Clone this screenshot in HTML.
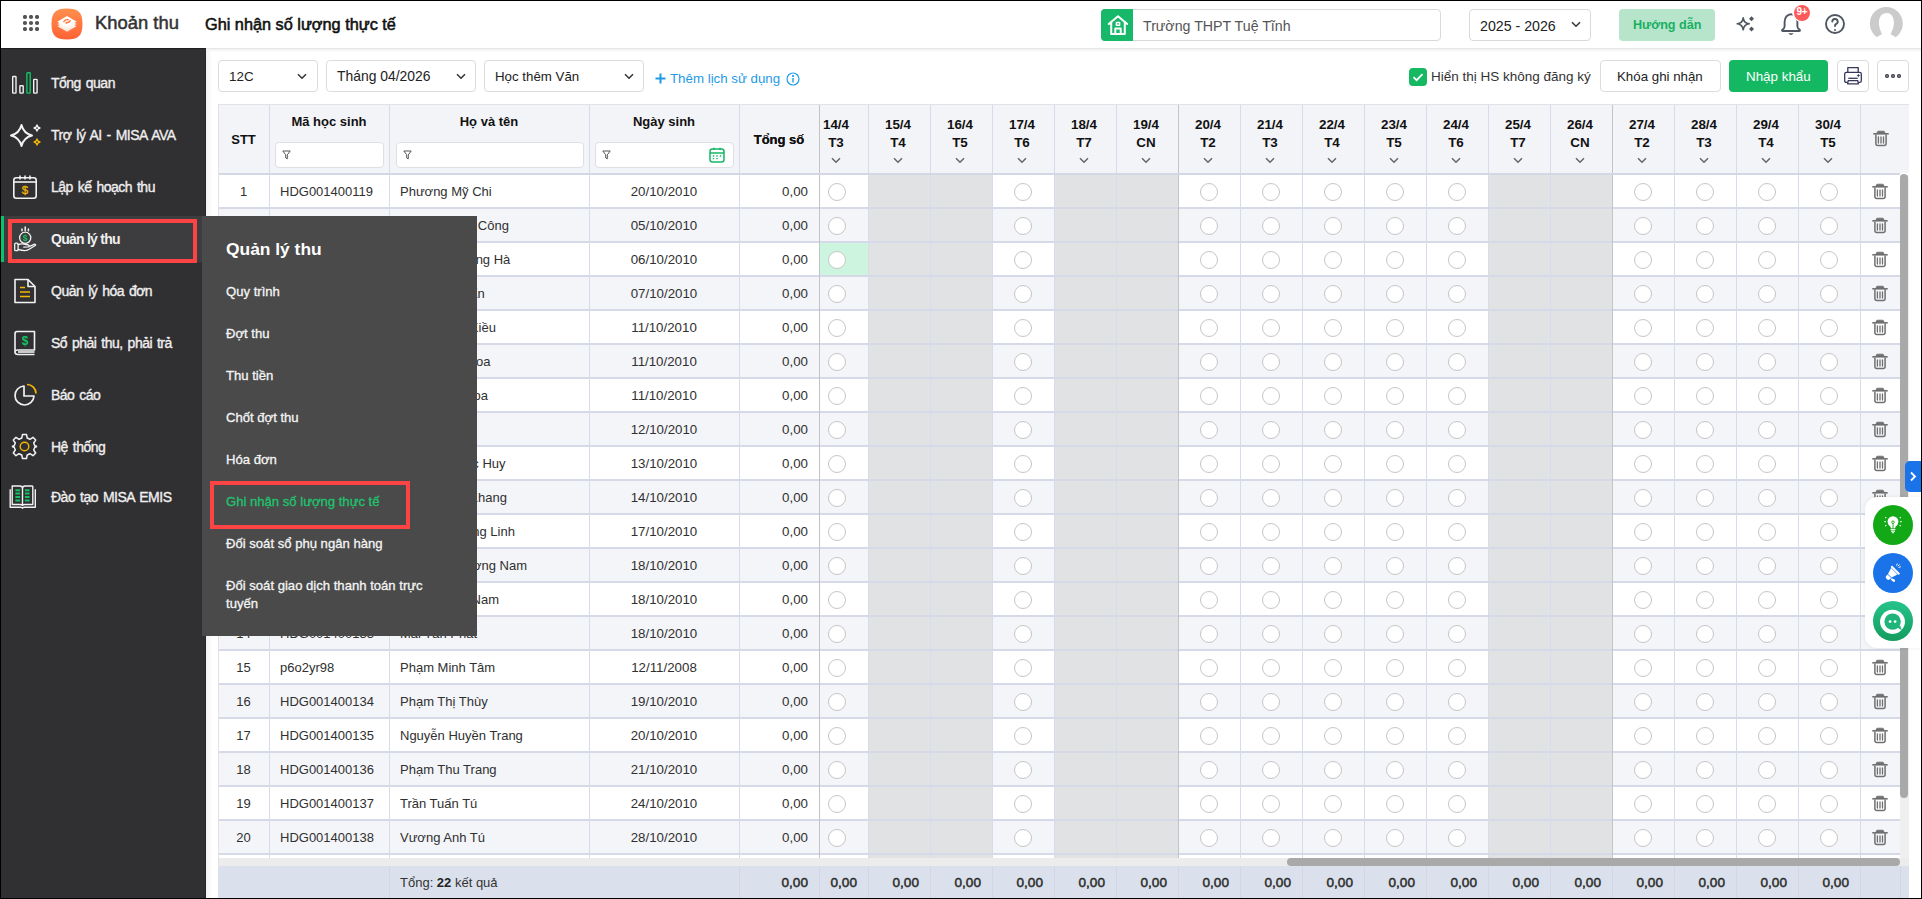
<!DOCTYPE html><html><head><meta charset="utf-8"><style>

*{box-sizing:border-box;margin:0;padding:0}
html,body{width:1922px;height:899px;overflow:hidden;background:#fff;font-family:"Liberation Sans", sans-serif;color:#222}
.a{position:absolute}
.t{position:absolute;white-space:nowrap;line-height:1}
svg{display:block}

</style></head><body>
<div class="a" style="left:0;top:0;width:1922px;height:1px;background:#000;z-index:50"></div>
<div class="a" style="left:0;top:0;width:1px;height:899px;background:#000;z-index:50"></div>
<div class="a" style="left:1921px;top:0;width:1px;height:899px;background:#000;z-index:50"></div>
<div class="a" style="left:0;top:898px;width:1922px;height:1px;background:#000;z-index:50"></div>
<div class="a" style="left:1px;top:1px;width:1920px;height:47px;background:#fff;z-index:5"></div>
<div class="a" style="left:1px;top:48px;width:1920px;height:1px;background:#e6e6e6;z-index:5"></div>
<div class="a" style="left:206px;top:49px;width:1715px;height:3px;background:linear-gradient(#f0f0f0,#fff);z-index:1"></div>
<svg class="a" style="left:23px;top:15px;z-index:6" width="16" height="16" viewBox="0 0 16 16"><circle cx="2" cy="2" r="2.1" fill="#555"/><circle cx="2" cy="8" r="2.1" fill="#555"/><circle cx="2" cy="14" r="2.1" fill="#555"/><circle cx="8" cy="2" r="2.1" fill="#555"/><circle cx="8" cy="8" r="2.1" fill="#555"/><circle cx="8" cy="14" r="2.1" fill="#555"/><circle cx="14" cy="2" r="2.1" fill="#555"/><circle cx="14" cy="8" r="2.1" fill="#555"/><circle cx="14" cy="14" r="2.1" fill="#555"/></svg>
<svg class="a" style="left:51px;top:8px;z-index:6" width="32" height="32" viewBox="0 0 32 32">
<defs><linearGradient id="lg" x1="0" y1="0" x2="0" y2="1"><stop offset="0" stop-color="#ff8f4f"/><stop offset="1" stop-color="#ff6234"/></linearGradient>
<linearGradient id="lw" x1="0" y1="0" x2="0" y2="1"><stop offset="0" stop-color="#fff"/><stop offset="1" stop-color="#fde3d2"/></linearGradient></defs>
<path d="M16 0.5 C27 0.5 31.5 4 31.5 16 C31.5 28 27 31.5 16 31.5 C5 31.5 0.5 28 0.5 16 C0.5 4 5 0.5 16 0.5 Z" fill="url(#lg)"/>
<path d="M6.5 18.3 L16 13.5 L25.5 18.3 L16 23.8 Z" fill="url(#lw)"/>
<path d="M6.3 16 L16 11 L25.7 16 L16 21 Z" fill="#fff3ea"/>
<path d="M6.3 13.8 L16 8 L25.7 13.8 L16 19 Z" fill="#fff"/>
<path d="M12.8 13.6 Q14 11.4 17 11.6 M19.2 12.6 Q18 15 15 14.8" stroke="#ff7d3e" stroke-width="1.4" fill="none" stroke-linecap="round"/>
<path d="M16.2 10.6 L17.8 11.6 L16.4 12.7 Z M15.8 13.8 L14.2 14.8 L15.6 15.9 Z" fill="#ff7d3e"/>
</svg>
<div class="t" style="left:95px;top:14px;font-size:18.4px;color:#333;-webkit-text-stroke:0.5px #333;z-index:6">Khoản thu</div>
<div class="t" style="left:205px;top:16px;font-size:16.3px;color:#111;-webkit-text-stroke:0.55px #111;z-index:6">Ghi nhận số lượng thực tế</div>
<div class="a" style="left:1101px;top:9px;width:340px;height:32px;border:1px solid #d9d9d9;border-radius:4px;background:#fff;z-index:6"></div>
<div class="a" style="left:1101px;top:9px;width:32px;height:32px;background:#18b86a;border-radius:4px 0 0 4px;z-index:7"></div>
<svg class="a" style="left:1107px;top:14px;z-index:8" width="22" height="22" viewBox="0 0 22 22" fill="none" stroke="#fff" stroke-width="2" stroke-linejoin="round" stroke-linecap="round">
<path d="M1.8 10 L11 2.2 L20.2 10"/><path d="M4.2 8.3 V20 H17.8 V8.3"/><path d="M8.3 20 V14.5 H13.7 V20"/><rect x="9.4" y="8.4" width="3.2" height="2.8" stroke-width="1.5"/></svg>
<div class="t" style="left:1143px;top:19px;font-size:14.2px;color:#555;z-index:8">Trường THPT Tuệ Tĩnh</div>
<div class="a" style="left:1469px;top:9px;width:122px;height:32px;border:1px solid #d9d9d9;border-radius:4px;background:#fff;z-index:6"></div>
<div class="t" style="left:1480px;top:19px;font-size:14.2px;color:#222;z-index:8">2025 - 2026</div>
<svg class="a" style="left:1571px;top:21px;z-index:8" width="10" height="7" viewBox="0 0 10 7"><path d="M1 1.2 L5 5.2 L9 1.2" stroke="#333" stroke-width="1.5" fill="none"/></svg>
<div class="a" style="left:1619px;top:9px;width:96px;height:32px;background:#b6e5cb;border-radius:4px;z-index:6"></div>
<div class="t" style="left:1633px;top:19px;font-size:12.6px;font-weight:bold;color:#17b063;z-index:8">Hướng dẫn</div>
<svg class="a" style="left:1735px;top:16px;z-index:8" width="20" height="16" viewBox="0 0 20 16">
<path d="M8.2 1.8 Q8.9 7.1 14.2 7.8 Q8.9 8.5 8.2 13.8 Q7.5 8.5 2.2 7.8 Q7.5 7.1 8.2 1.8 Z" fill="none" stroke="#50565f" stroke-width="1.6" stroke-linejoin="round"/>
<path d="M16.5 0.3 L19 2.8 L16.5 5.3 L14 2.8 Z" fill="#50565f"/><path d="M16.5 10.6 L19 13.1 L16.5 15.6 L14 13.1 Z" fill="#50565f"/></svg>
<svg class="a" style="left:1780px;top:13px;z-index:8" width="22" height="24" viewBox="0 0 22 24" fill="none" stroke="#50565f" stroke-width="1.9" stroke-linecap="round" stroke-linejoin="round">
<path d="M4.6 13.5 V8.8 A6.4 7.6 0 0 1 17.4 8.8 V13.5 Q17.6 15.6 19.6 16.6 Q20.6 17.9 19 18 H3 Q1.4 17.9 2.4 16.6 Q4.4 15.6 4.6 13.5 Z"/></svg>
<svg class="a" style="left:1788px;top:33px;z-index:8" width="6" height="3" viewBox="0 0 6 3"><path d="M0.3 0.3 H5.7 Q3 3.5 0.3 0.3 Z" fill="#50565f"/></svg>
<div class="a" style="left:1792px;top:3px;width:19px;height:19px;border-radius:50%;background:#fff;z-index:9"></div>
<div class="a" style="left:1794px;top:5px;width:16px;height:16px;border-radius:50%;background:#fd5a5a;z-index:9"></div>
<div class="t" style="left:1794px;top:7px;width:16px;text-align:center;font-size:10px;font-weight:bold;letter-spacing:-0.3px;color:#fff;z-index:10">9+</div>
<svg class="a" style="left:1825px;top:14px;z-index:8" width="20" height="20" viewBox="0 0 20 20" fill="none" stroke="#50565f" stroke-width="1.9" stroke-linecap="round">
<circle cx="10" cy="10" r="9"/><path d="M7.3 7.6 A2.7 2.6 0 1 1 10.9 10.1 Q10 10.7 10 12"/></svg>
<div class="a" style="left:1834px;top:29px;width:2.4px;height:2.4px;background:#50565f;z-index:9;border-radius:1px"></div>
<svg class="a" style="left:1869px;top:6px;z-index:8" width="34" height="34" viewBox="0 0 34 34">
<circle cx="17.3" cy="17.5" r="16.5" fill="#cbcbcb"/>
<path d="M7 34 L8.2 31 Q9.5 29.8 12.8 28.2 Q10 22 9.8 17 Q10.3 7 17.4 7 Q24.7 7 25 16.5 Q25 22 21.6 28.2 Q25 29.8 26.3 31 L28 34 Z" fill="#fff"/></svg>
<div class="a" style="left:1px;top:48px;width:205px;height:850px;background:#302f32;z-index:20"></div>
<div class="a" style="left:1px;top:48px;width:205px;height:1px;background:#1f1e21;z-index:20"></div>
<div class="a" style="left:205px;top:48px;width:1px;height:850px;background:#28272a;z-index:20"></div>
<div class="a" style="left:206px;top:49px;width:6px;height:849px;background:linear-gradient(90deg,#f2f2f2,rgba(255,255,255,0));z-index:1"></div>
<div class="a" style="left:1px;top:216px;width:201px;height:46px;background:#3d3d3f;z-index:21"></div>
<div class="a" style="left:1px;top:216px;width:3px;height:46px;background:#06c46e;z-index:22"></div>
<div class="t" style="left:51px;top:76px;font-size:14px;letter-spacing:-0.5px;word-spacing:1.5px;-webkit-text-stroke:0.35px #eee;color:#f0f0f0;z-index:23">Tổng quan</div>
<div class="t" style="left:51px;top:128px;font-size:14px;letter-spacing:-0.5px;word-spacing:1.5px;-webkit-text-stroke:0.35px #eee;color:#f0f0f0;z-index:23">Trợ lý AI - MISA AVA</div>
<div class="t" style="left:51px;top:180px;font-size:14px;letter-spacing:-0.5px;word-spacing:1.5px;-webkit-text-stroke:0.35px #eee;color:#f0f0f0;z-index:23">Lập kế hoạch thu</div>
<div class="t" style="left:51px;top:232px;font-weight:bold;font-size:14px;letter-spacing:-0.75px;color:#f0f0f0;z-index:23">Quản lý thu</div>
<div class="t" style="left:51px;top:284px;font-size:14px;letter-spacing:-0.5px;word-spacing:1.5px;-webkit-text-stroke:0.35px #eee;color:#f0f0f0;z-index:23">Quản lý hóa đơn</div>
<div class="t" style="left:51px;top:336px;font-size:14px;letter-spacing:-0.5px;word-spacing:1.5px;-webkit-text-stroke:0.35px #eee;color:#f0f0f0;z-index:23">Sổ phải thu, phải trả</div>
<div class="t" style="left:51px;top:388px;font-size:14px;letter-spacing:-0.5px;word-spacing:1.5px;-webkit-text-stroke:0.35px #eee;color:#f0f0f0;z-index:23">Báo cáo</div>
<div class="t" style="left:51px;top:440px;font-size:14px;letter-spacing:-0.5px;word-spacing:1.5px;-webkit-text-stroke:0.35px #eee;color:#f0f0f0;z-index:23">Hệ thống</div>
<div class="t" style="left:51px;top:490px;font-size:14px;letter-spacing:-0.5px;word-spacing:1.5px;-webkit-text-stroke:0.35px #eee;color:#f0f0f0;z-index:23">Đào tạo MISA EMIS</div>
<svg class="a" style="left:11px;top:71px;z-index:23" width="28" height="24" viewBox="0 0 28 24" fill="none" stroke-width="1.4"><rect x="1.7" y="5.5" width="3.3" height="16.6" rx="0.6" stroke="#f2f2f2"/><rect x="8.9" y="14.7" width="3.3" height="7.4" rx="0.6" stroke="#f2f2f2"/><rect x="15.9" y="1.7" width="3.3" height="20.4" rx="0.6" stroke="#12c264"/><rect x="22.7" y="8.4" width="3.4" height="13.7" rx="0.6" stroke="#f2f2f2"/></svg>
<svg class="a" style="left:9px;top:123px;z-index:23" width="32" height="25" viewBox="0 0 32 25" fill="none" stroke-width="1.8" stroke-linejoin="round"><path d="M12.5 2 Q14.6 10.4 23 12.5 Q14.6 14.6 12.5 23 Q10.4 14.6 2 12.5 Q10.4 10.4 12.5 2 Z" stroke="#f2f2f2" stroke-width="2"/><path d="M28 2 Q28.5 4.5 31 5 Q28.5 5.5 28 8 Q27.5 5.5 25 5 Q27.5 4.5 28 2Z" stroke="#f2f2f2" stroke-width="1.3"/><path d="M28 16 Q28.5 18.5 31 19 Q28.5 19.5 28 22 Q27.5 19.5 25 19 Q27.5 18.5 28 16Z" stroke="#f2b705" stroke-width="1.3"/></svg>
<svg class="a" style="left:12px;top:174px;z-index:23" width="26" height="26" viewBox="0 0 26 26" fill="none" stroke-width="1.6"><rect x="1.8" y="3.8" width="22.4" height="20.4" rx="2.5" stroke="#f2f2f2"/><path d="M1.8 8 H24.2" stroke="#f2f2f2"/><path d="M8 1.5 V5.5 M13 1.5 V5.5 M18 1.5 V5.5" stroke="#f2f2f2"/><text x="13" y="20" font-family="Liberation Sans" font-size="11.5" fill="#f2b705" stroke="#f2b705" stroke-width="0.3" text-anchor="middle">$</text></svg>
<svg class="a" style="left:13px;top:226px;z-index:23" width="24" height="27" viewBox="0 0 24 27" fill="none" stroke-width="1.3" stroke-linecap="round" stroke-linejoin="round"><path d="M12.2 0.9 V4.6 M9 3 V4.8 M15.4 3 V4.8" stroke="#f2f2f2" stroke-width="1.5"/><circle cx="12.2" cy="11.8" r="5.6" stroke="#f2f2f2"/><text x="12.2" y="14.9" font-family="Liberation Sans" font-size="8.6" font-weight="bold" fill="#12c264" stroke="none" text-anchor="middle">$</text><rect x="1.7" y="17.2" width="3.4" height="7.4" rx="0.9" stroke="#f2f2f2"/><path d="M5.1 18.6 Q8 17.4 11 18 L15.4 19 Q17 19.9 15.6 20.9 L10.8 21.1 M5.1 23.4 Q8.5 24.6 12 24.6 Q14.5 24.6 16.6 23 L22.6 19.3 Q22.8 17.9 21 18.3 L15.6 20.9" stroke="#f2f2f2"/></svg>
<svg class="a" style="left:13px;top:278px;z-index:23" width="24" height="26" viewBox="0 0 24 26" fill="none" stroke-width="1.6" stroke-linejoin="round"><path d="M2 1.5 H15 L22 8.5 V24.5 H2 Z" stroke="#f2f2f2"/><path d="M15 1.5 V8.5 H22" stroke="#f2f2f2"/><path d="M7 9.5 H12 M7 14 H17 M7 18.5 H17" stroke="#f2b705" stroke-width="1.7"/></svg>
<svg class="a" style="left:13px;top:330px;z-index:23" width="24" height="26" viewBox="0 0 24 26" fill="none" stroke-width="1.6" stroke-linejoin="round"><path d="M4 1.5 H21.5 V20 H5 Q2 20 2 22 Q2 24.5 5 24.5 H21.5 M2 22 V4 Q2 1.5 4 1.5" stroke="#f2f2f2"/><path d="M5 22 H21.5" stroke="#f2f2f2"/><text x="12" y="14.5" font-family="Liberation Sans" font-size="12" font-weight="bold" fill="#12c264" stroke="none" text-anchor="middle">$</text></svg>
<svg class="a" style="left:13px;top:383px;z-index:23" width="25" height="25" viewBox="0 0 25 25" fill="none" stroke-width="1.7"><path d="M11 3 A9.5 9.5 0 1 0 21 13 H11 Z" stroke="#f2f2f2" stroke-linejoin="round"/><path d="M14 1.5 A9 9 0 0 1 23 10.5" stroke="#f2b705"/></svg>
<svg class="a" style="left:11px;top:433px;z-index:23" width="27" height="27" viewBox="0 0 27 27" fill="none" stroke-width="1.5" stroke-linejoin="round"><path d="M11.5 1.5 H15.5 L16.2 5 L19 6.3 L22 4.3 L24.7 7 L22.7 10 L23.8 12.7 L25.5 13.3 V13.7 L23.8 14.3 L22.7 17 L24.7 20 L22 22.7 L19 20.7 L16.2 22 L15.5 25.5 H11.5 L10.8 22 L8 20.7 L5 22.7 L2.3 20 L4.3 17 L3.2 14.3 L1.5 13.7 V13.3 L3.2 12.7 L4.3 10 L2.3 7 L5 4.3 L8 6.3 L10.8 5 Z" stroke="#f2f2f2"/><circle cx="13.5" cy="13.5" r="4.3" stroke="#f2b705" stroke-width="1.4"/></svg>
<svg class="a" style="left:9px;top:485px;z-index:23" width="28" height="24" viewBox="0 0 28 24" fill="none" stroke-width="1.4" stroke-linejoin="round"><path d="M1.2 4.3 V22.3 H11.5 Q13.5 22.3 13.5 23.3 Q13.5 22.3 15.5 22.3 H26.3 V4.3" stroke="#f2f2f2"/><path d="M3.2 1 H11 Q13.5 1 13.5 3.5 V20.5 Q13 19.5 11 19.5 H3.2 Z" stroke="#f2f2f2"/><path d="M23.8 1 H16 Q13.5 1 13.5 3.5 M23.8 1 V19.5 H16 Q14 19.5 13.5 20.5" stroke="#f2f2f2"/><path d="M6.4 5.3 H11.1 M6.4 8.6 H11.1 M6.4 11.9 H11.1 M6.4 15.4 H11.1 M15.9 5.3 H20.6 M15.9 8.6 H20.6 M15.9 11.9 H20.6 M15.9 15.4 H20.6" stroke="#12c264" stroke-width="2"/></svg>
<div class="a" style="left:8px;top:219px;width:189px;height:44px;border:4px solid #fd4444;z-index:30"></div>
<div class="a" style="left:218px;top:60px;width:100px;height:32px;border:1px solid #dcdcdc;border-radius:4px;background:#fff;"></div>
<div class="t" style="left:229px;top:70px;font-size:13.4px;color:#222">12C</div>
<svg class="a" style="left:297px;top:73px;z-index:8" width="10" height="7" viewBox="0 0 10 7"><path d="M1 1.2 L5 5.2 L9 1.2" stroke="#333" stroke-width="1.5" fill="none"/></svg>
<div class="a" style="left:326px;top:60px;width:150px;height:32px;border:1px solid #dcdcdc;border-radius:4px;background:#fff;"></div>
<div class="t" style="left:337px;top:70px;font-size:13.9px;color:#222">Tháng 04/2026</div>
<svg class="a" style="left:456px;top:73px;z-index:8" width="10" height="7" viewBox="0 0 10 7"><path d="M1 1.2 L5 5.2 L9 1.2" stroke="#333" stroke-width="1.5" fill="none"/></svg>
<div class="a" style="left:484px;top:60px;width:160px;height:32px;border:1px solid #dcdcdc;border-radius:4px;background:#fff;"></div>
<div class="t" style="left:495px;top:70px;font-size:13.3px;color:#222">Học thêm Văn</div>
<svg class="a" style="left:624px;top:73px;z-index:8" width="10" height="7" viewBox="0 0 10 7"><path d="M1 1.2 L5 5.2 L9 1.2" stroke="#333" stroke-width="1.5" fill="none"/></svg>
<svg class="a" style="left:655px;top:73px" width="11" height="11" viewBox="0 0 11 11"><path d="M5.5 0.5 V10.5 M0.5 5.5 H10.5" stroke="#1e9ae6" stroke-width="2"/></svg>
<div class="t" style="left:670px;top:72px;font-size:13.3px;color:#1e9ae6">Thêm lịch sử dụng</div>
<svg class="a" style="left:786px;top:72px" width="14" height="14" viewBox="0 0 14 14" fill="none" stroke="#1e9ae6" stroke-width="1.2"><circle cx="7" cy="7" r="6"/><path d="M7 6 V10.5" stroke-width="1.4"/><circle cx="7" cy="4" r="0.5" fill="#1e9ae6"/></svg>
<div class="a" style="left:1409px;top:68px;width:18px;height:18px;border-radius:4px;background:#16b862"></div>
<svg class="a" style="left:1409px;top:68px" width="18" height="18" viewBox="0 0 18 18"><path d="M4.5 9.2 L7.6 12.2 L13.5 6.2" stroke="#fff" stroke-width="1.8" fill="none"/></svg>
<div class="t" style="left:1431px;top:70px;font-size:13.5px;color:#333">Hiển thị HS không đăng ký</div>
<div class="a" style="left:1600px;top:60px;width:121px;height:32px;border:1px solid #dcdcdc;border-radius:4px;background:#fff;"></div>
<div class="t" style="left:1617px;top:70px;font-size:13.3px;color:#222">Khóa ghi nhận</div>
<div class="a" style="left:1729px;top:60px;width:99px;height:32px;background:#14b863;border-radius:4px"></div>
<div class="t" style="left:1746px;top:70px;font-size:13.4px;color:#fff">Nhập khẩu</div>
<div class="a" style="left:1837px;top:60px;width:32px;height:32px;border:1px solid #dcdcdc;border-radius:4px;background:#fff;"></div>
<svg class="a" style="left:1843px;top:66px" width="20" height="20" viewBox="0 0 20 20" fill="none" stroke="#37375a" stroke-width="1.3" stroke-linejoin="round">
<path d="M4.8 6.2 V1.6 H15.2 V6.2"/><path d="M4.6 16.4 H3.4 Q1.7 16.4 1.7 14.7 V8 Q1.7 6.4 3.4 6.4 H16.6 Q18.3 6.4 18.3 8 V14.7 Q18.3 16.4 16.6 16.4 H15.4"/>
<path d="M5.3 12.3 H14.7"/><path d="M5.2 14.6 H14.8 L15.4 17.8 H4.6 Z"/><path d="M15.4 8.3 L16.6 9.5 L15.4 10.7 L14.2 9.5 Z" fill="#37375a" stroke-width="0.6"/></svg>
<div class="a" style="left:1877px;top:60px;width:32px;height:32px;border:1px solid #dcdcdc;border-radius:4px;background:#fff;"></div>
<svg class="a" style="left:1883px;top:72px" width="20" height="8" viewBox="0 0 20 8"><circle cx="4" cy="4" r="1.5" fill="#888" stroke="#3a3a4a" stroke-width="1.1"/><circle cx="10" cy="4" r="1.5" fill="#888" stroke="#3a3a4a" stroke-width="1.1"/><circle cx="16" cy="4" r="1.5" fill="#888" stroke="#3a3a4a" stroke-width="1.1"/></svg>
<div class="a" style="left:218px;top:104px;width:1691px;height:1px;background:#e2e2e6"></div>
<div class="a" style="left:218px;top:104px;width:1px;height:762px;background:#e2e2e6;z-index:3"></div>
<div class="a" style="left:219px;top:105px;width:1690px;height:68px;background:#f3f4f8"></div>
<div class="a" style="left:219px;top:173px;width:1681px;height:2px;background:#d3d7e6;z-index:2"></div>
<div class="a" style="left:219px;top:175px;width:1681px;height:683px;overflow:hidden;z-index:1">
<div class="a" style="left:0;top:0px;width:1681px;height:32px;background:#fff"></div>
<div class="a" style="left:0;top:32px;width:1681px;height:2px;background:#d6d9e8"></div>
<div class="a" style="left:0;top:34px;width:1681px;height:32px;background:#f4f5f9"></div>
<div class="a" style="left:0;top:66px;width:1681px;height:2px;background:#d6d9e8"></div>
<div class="a" style="left:0;top:68px;width:1681px;height:32px;background:#fff"></div>
<div class="a" style="left:0;top:100px;width:1681px;height:2px;background:#d6d9e8"></div>
<div class="a" style="left:0;top:102px;width:1681px;height:32px;background:#f4f5f9"></div>
<div class="a" style="left:0;top:134px;width:1681px;height:2px;background:#d6d9e8"></div>
<div class="a" style="left:0;top:136px;width:1681px;height:32px;background:#fff"></div>
<div class="a" style="left:0;top:168px;width:1681px;height:2px;background:#d6d9e8"></div>
<div class="a" style="left:0;top:170px;width:1681px;height:32px;background:#f4f5f9"></div>
<div class="a" style="left:0;top:202px;width:1681px;height:2px;background:#d6d9e8"></div>
<div class="a" style="left:0;top:204px;width:1681px;height:32px;background:#fff"></div>
<div class="a" style="left:0;top:236px;width:1681px;height:2px;background:#d6d9e8"></div>
<div class="a" style="left:0;top:238px;width:1681px;height:32px;background:#f4f5f9"></div>
<div class="a" style="left:0;top:270px;width:1681px;height:2px;background:#d6d9e8"></div>
<div class="a" style="left:0;top:272px;width:1681px;height:32px;background:#fff"></div>
<div class="a" style="left:0;top:304px;width:1681px;height:2px;background:#d6d9e8"></div>
<div class="a" style="left:0;top:306px;width:1681px;height:32px;background:#f4f5f9"></div>
<div class="a" style="left:0;top:338px;width:1681px;height:2px;background:#d6d9e8"></div>
<div class="a" style="left:0;top:340px;width:1681px;height:32px;background:#fff"></div>
<div class="a" style="left:0;top:372px;width:1681px;height:2px;background:#d6d9e8"></div>
<div class="a" style="left:0;top:374px;width:1681px;height:32px;background:#f4f5f9"></div>
<div class="a" style="left:0;top:406px;width:1681px;height:2px;background:#d6d9e8"></div>
<div class="a" style="left:0;top:408px;width:1681px;height:32px;background:#fff"></div>
<div class="a" style="left:0;top:440px;width:1681px;height:2px;background:#d6d9e8"></div>
<div class="a" style="left:0;top:442px;width:1681px;height:32px;background:#f4f5f9"></div>
<div class="a" style="left:0;top:474px;width:1681px;height:2px;background:#d6d9e8"></div>
<div class="a" style="left:0;top:476px;width:1681px;height:32px;background:#fff"></div>
<div class="a" style="left:0;top:508px;width:1681px;height:2px;background:#d6d9e8"></div>
<div class="a" style="left:0;top:510px;width:1681px;height:32px;background:#f4f5f9"></div>
<div class="a" style="left:0;top:542px;width:1681px;height:2px;background:#d6d9e8"></div>
<div class="a" style="left:0;top:544px;width:1681px;height:32px;background:#fff"></div>
<div class="a" style="left:0;top:576px;width:1681px;height:2px;background:#d6d9e8"></div>
<div class="a" style="left:0;top:578px;width:1681px;height:32px;background:#f4f5f9"></div>
<div class="a" style="left:0;top:610px;width:1681px;height:2px;background:#d6d9e8"></div>
<div class="a" style="left:0;top:612px;width:1681px;height:32px;background:#fff"></div>
<div class="a" style="left:0;top:644px;width:1681px;height:2px;background:#d6d9e8"></div>
<div class="a" style="left:0;top:646px;width:1681px;height:32px;background:#f4f5f9"></div>
<div class="a" style="left:0;top:678px;width:1681px;height:2px;background:#d6d9e8"></div>
<div class="a" style="left:0;top:680px;width:1681px;height:32px;background:#fff"></div>
<div class="a" style="left:0;top:712px;width:1681px;height:2px;background:#d6d9e8"></div>
<div class="a" style="left:650px;top:0;width:61px;height:683px;background:#e1e2e4"></div>
<div class="a" style="left:712px;top:0;width:61px;height:683px;background:#e1e2e4"></div>
<div class="a" style="left:836px;top:0;width:61px;height:683px;background:#e1e2e4"></div>
<div class="a" style="left:898px;top:0;width:61px;height:683px;background:#e1e2e4"></div>
<div class="a" style="left:1270px;top:0;width:61px;height:683px;background:#e1e2e4"></div>
<div class="a" style="left:1332px;top:0;width:61px;height:683px;background:#e1e2e4"></div>
<div class="a" style="left:650px;top:32px;width:61px;height:2px;background:#d6d9e8"></div>
<div class="a" style="left:712px;top:32px;width:61px;height:2px;background:#d6d9e8"></div>
<div class="a" style="left:836px;top:32px;width:61px;height:2px;background:#d6d9e8"></div>
<div class="a" style="left:898px;top:32px;width:61px;height:2px;background:#d6d9e8"></div>
<div class="a" style="left:1270px;top:32px;width:61px;height:2px;background:#d6d9e8"></div>
<div class="a" style="left:1332px;top:32px;width:61px;height:2px;background:#d6d9e8"></div>
<div class="a" style="left:650px;top:66px;width:61px;height:2px;background:#d6d9e8"></div>
<div class="a" style="left:712px;top:66px;width:61px;height:2px;background:#d6d9e8"></div>
<div class="a" style="left:836px;top:66px;width:61px;height:2px;background:#d6d9e8"></div>
<div class="a" style="left:898px;top:66px;width:61px;height:2px;background:#d6d9e8"></div>
<div class="a" style="left:1270px;top:66px;width:61px;height:2px;background:#d6d9e8"></div>
<div class="a" style="left:1332px;top:66px;width:61px;height:2px;background:#d6d9e8"></div>
<div class="a" style="left:650px;top:100px;width:61px;height:2px;background:#d6d9e8"></div>
<div class="a" style="left:712px;top:100px;width:61px;height:2px;background:#d6d9e8"></div>
<div class="a" style="left:836px;top:100px;width:61px;height:2px;background:#d6d9e8"></div>
<div class="a" style="left:898px;top:100px;width:61px;height:2px;background:#d6d9e8"></div>
<div class="a" style="left:1270px;top:100px;width:61px;height:2px;background:#d6d9e8"></div>
<div class="a" style="left:1332px;top:100px;width:61px;height:2px;background:#d6d9e8"></div>
<div class="a" style="left:650px;top:134px;width:61px;height:2px;background:#d6d9e8"></div>
<div class="a" style="left:712px;top:134px;width:61px;height:2px;background:#d6d9e8"></div>
<div class="a" style="left:836px;top:134px;width:61px;height:2px;background:#d6d9e8"></div>
<div class="a" style="left:898px;top:134px;width:61px;height:2px;background:#d6d9e8"></div>
<div class="a" style="left:1270px;top:134px;width:61px;height:2px;background:#d6d9e8"></div>
<div class="a" style="left:1332px;top:134px;width:61px;height:2px;background:#d6d9e8"></div>
<div class="a" style="left:650px;top:168px;width:61px;height:2px;background:#d6d9e8"></div>
<div class="a" style="left:712px;top:168px;width:61px;height:2px;background:#d6d9e8"></div>
<div class="a" style="left:836px;top:168px;width:61px;height:2px;background:#d6d9e8"></div>
<div class="a" style="left:898px;top:168px;width:61px;height:2px;background:#d6d9e8"></div>
<div class="a" style="left:1270px;top:168px;width:61px;height:2px;background:#d6d9e8"></div>
<div class="a" style="left:1332px;top:168px;width:61px;height:2px;background:#d6d9e8"></div>
<div class="a" style="left:650px;top:202px;width:61px;height:2px;background:#d6d9e8"></div>
<div class="a" style="left:712px;top:202px;width:61px;height:2px;background:#d6d9e8"></div>
<div class="a" style="left:836px;top:202px;width:61px;height:2px;background:#d6d9e8"></div>
<div class="a" style="left:898px;top:202px;width:61px;height:2px;background:#d6d9e8"></div>
<div class="a" style="left:1270px;top:202px;width:61px;height:2px;background:#d6d9e8"></div>
<div class="a" style="left:1332px;top:202px;width:61px;height:2px;background:#d6d9e8"></div>
<div class="a" style="left:650px;top:236px;width:61px;height:2px;background:#d6d9e8"></div>
<div class="a" style="left:712px;top:236px;width:61px;height:2px;background:#d6d9e8"></div>
<div class="a" style="left:836px;top:236px;width:61px;height:2px;background:#d6d9e8"></div>
<div class="a" style="left:898px;top:236px;width:61px;height:2px;background:#d6d9e8"></div>
<div class="a" style="left:1270px;top:236px;width:61px;height:2px;background:#d6d9e8"></div>
<div class="a" style="left:1332px;top:236px;width:61px;height:2px;background:#d6d9e8"></div>
<div class="a" style="left:650px;top:270px;width:61px;height:2px;background:#d6d9e8"></div>
<div class="a" style="left:712px;top:270px;width:61px;height:2px;background:#d6d9e8"></div>
<div class="a" style="left:836px;top:270px;width:61px;height:2px;background:#d6d9e8"></div>
<div class="a" style="left:898px;top:270px;width:61px;height:2px;background:#d6d9e8"></div>
<div class="a" style="left:1270px;top:270px;width:61px;height:2px;background:#d6d9e8"></div>
<div class="a" style="left:1332px;top:270px;width:61px;height:2px;background:#d6d9e8"></div>
<div class="a" style="left:650px;top:304px;width:61px;height:2px;background:#d6d9e8"></div>
<div class="a" style="left:712px;top:304px;width:61px;height:2px;background:#d6d9e8"></div>
<div class="a" style="left:836px;top:304px;width:61px;height:2px;background:#d6d9e8"></div>
<div class="a" style="left:898px;top:304px;width:61px;height:2px;background:#d6d9e8"></div>
<div class="a" style="left:1270px;top:304px;width:61px;height:2px;background:#d6d9e8"></div>
<div class="a" style="left:1332px;top:304px;width:61px;height:2px;background:#d6d9e8"></div>
<div class="a" style="left:650px;top:338px;width:61px;height:2px;background:#d6d9e8"></div>
<div class="a" style="left:712px;top:338px;width:61px;height:2px;background:#d6d9e8"></div>
<div class="a" style="left:836px;top:338px;width:61px;height:2px;background:#d6d9e8"></div>
<div class="a" style="left:898px;top:338px;width:61px;height:2px;background:#d6d9e8"></div>
<div class="a" style="left:1270px;top:338px;width:61px;height:2px;background:#d6d9e8"></div>
<div class="a" style="left:1332px;top:338px;width:61px;height:2px;background:#d6d9e8"></div>
<div class="a" style="left:650px;top:372px;width:61px;height:2px;background:#d6d9e8"></div>
<div class="a" style="left:712px;top:372px;width:61px;height:2px;background:#d6d9e8"></div>
<div class="a" style="left:836px;top:372px;width:61px;height:2px;background:#d6d9e8"></div>
<div class="a" style="left:898px;top:372px;width:61px;height:2px;background:#d6d9e8"></div>
<div class="a" style="left:1270px;top:372px;width:61px;height:2px;background:#d6d9e8"></div>
<div class="a" style="left:1332px;top:372px;width:61px;height:2px;background:#d6d9e8"></div>
<div class="a" style="left:650px;top:406px;width:61px;height:2px;background:#d6d9e8"></div>
<div class="a" style="left:712px;top:406px;width:61px;height:2px;background:#d6d9e8"></div>
<div class="a" style="left:836px;top:406px;width:61px;height:2px;background:#d6d9e8"></div>
<div class="a" style="left:898px;top:406px;width:61px;height:2px;background:#d6d9e8"></div>
<div class="a" style="left:1270px;top:406px;width:61px;height:2px;background:#d6d9e8"></div>
<div class="a" style="left:1332px;top:406px;width:61px;height:2px;background:#d6d9e8"></div>
<div class="a" style="left:650px;top:440px;width:61px;height:2px;background:#d6d9e8"></div>
<div class="a" style="left:712px;top:440px;width:61px;height:2px;background:#d6d9e8"></div>
<div class="a" style="left:836px;top:440px;width:61px;height:2px;background:#d6d9e8"></div>
<div class="a" style="left:898px;top:440px;width:61px;height:2px;background:#d6d9e8"></div>
<div class="a" style="left:1270px;top:440px;width:61px;height:2px;background:#d6d9e8"></div>
<div class="a" style="left:1332px;top:440px;width:61px;height:2px;background:#d6d9e8"></div>
<div class="a" style="left:650px;top:474px;width:61px;height:2px;background:#d6d9e8"></div>
<div class="a" style="left:712px;top:474px;width:61px;height:2px;background:#d6d9e8"></div>
<div class="a" style="left:836px;top:474px;width:61px;height:2px;background:#d6d9e8"></div>
<div class="a" style="left:898px;top:474px;width:61px;height:2px;background:#d6d9e8"></div>
<div class="a" style="left:1270px;top:474px;width:61px;height:2px;background:#d6d9e8"></div>
<div class="a" style="left:1332px;top:474px;width:61px;height:2px;background:#d6d9e8"></div>
<div class="a" style="left:650px;top:508px;width:61px;height:2px;background:#d6d9e8"></div>
<div class="a" style="left:712px;top:508px;width:61px;height:2px;background:#d6d9e8"></div>
<div class="a" style="left:836px;top:508px;width:61px;height:2px;background:#d6d9e8"></div>
<div class="a" style="left:898px;top:508px;width:61px;height:2px;background:#d6d9e8"></div>
<div class="a" style="left:1270px;top:508px;width:61px;height:2px;background:#d6d9e8"></div>
<div class="a" style="left:1332px;top:508px;width:61px;height:2px;background:#d6d9e8"></div>
<div class="a" style="left:650px;top:542px;width:61px;height:2px;background:#d6d9e8"></div>
<div class="a" style="left:712px;top:542px;width:61px;height:2px;background:#d6d9e8"></div>
<div class="a" style="left:836px;top:542px;width:61px;height:2px;background:#d6d9e8"></div>
<div class="a" style="left:898px;top:542px;width:61px;height:2px;background:#d6d9e8"></div>
<div class="a" style="left:1270px;top:542px;width:61px;height:2px;background:#d6d9e8"></div>
<div class="a" style="left:1332px;top:542px;width:61px;height:2px;background:#d6d9e8"></div>
<div class="a" style="left:650px;top:576px;width:61px;height:2px;background:#d6d9e8"></div>
<div class="a" style="left:712px;top:576px;width:61px;height:2px;background:#d6d9e8"></div>
<div class="a" style="left:836px;top:576px;width:61px;height:2px;background:#d6d9e8"></div>
<div class="a" style="left:898px;top:576px;width:61px;height:2px;background:#d6d9e8"></div>
<div class="a" style="left:1270px;top:576px;width:61px;height:2px;background:#d6d9e8"></div>
<div class="a" style="left:1332px;top:576px;width:61px;height:2px;background:#d6d9e8"></div>
<div class="a" style="left:650px;top:610px;width:61px;height:2px;background:#d6d9e8"></div>
<div class="a" style="left:712px;top:610px;width:61px;height:2px;background:#d6d9e8"></div>
<div class="a" style="left:836px;top:610px;width:61px;height:2px;background:#d6d9e8"></div>
<div class="a" style="left:898px;top:610px;width:61px;height:2px;background:#d6d9e8"></div>
<div class="a" style="left:1270px;top:610px;width:61px;height:2px;background:#d6d9e8"></div>
<div class="a" style="left:1332px;top:610px;width:61px;height:2px;background:#d6d9e8"></div>
<div class="a" style="left:650px;top:644px;width:61px;height:2px;background:#d6d9e8"></div>
<div class="a" style="left:712px;top:644px;width:61px;height:2px;background:#d6d9e8"></div>
<div class="a" style="left:836px;top:644px;width:61px;height:2px;background:#d6d9e8"></div>
<div class="a" style="left:898px;top:644px;width:61px;height:2px;background:#d6d9e8"></div>
<div class="a" style="left:1270px;top:644px;width:61px;height:2px;background:#d6d9e8"></div>
<div class="a" style="left:1332px;top:644px;width:61px;height:2px;background:#d6d9e8"></div>
<div class="a" style="left:650px;top:678px;width:61px;height:2px;background:#d6d9e8"></div>
<div class="a" style="left:712px;top:678px;width:61px;height:2px;background:#d6d9e8"></div>
<div class="a" style="left:836px;top:678px;width:61px;height:2px;background:#d6d9e8"></div>
<div class="a" style="left:898px;top:678px;width:61px;height:2px;background:#d6d9e8"></div>
<div class="a" style="left:1270px;top:678px;width:61px;height:2px;background:#d6d9e8"></div>
<div class="a" style="left:1332px;top:678px;width:61px;height:2px;background:#d6d9e8"></div>
<div class="a" style="left:650px;top:712px;width:61px;height:2px;background:#d6d9e8"></div>
<div class="a" style="left:712px;top:712px;width:61px;height:2px;background:#d6d9e8"></div>
<div class="a" style="left:836px;top:712px;width:61px;height:2px;background:#d6d9e8"></div>
<div class="a" style="left:898px;top:712px;width:61px;height:2px;background:#d6d9e8"></div>
<div class="a" style="left:1270px;top:712px;width:61px;height:2px;background:#d6d9e8"></div>
<div class="a" style="left:1332px;top:712px;width:61px;height:2px;background:#d6d9e8"></div>
<div class="a" style="left:601px;top:68px;width:48px;height:32px;background:#cdf4df"></div>
<div class="a" style="left:50px;top:0;width:1px;height:683px;background:#d8dbe9"></div>
<div class="a" style="left:170px;top:0;width:1px;height:683px;background:#d8dbe9"></div>
<div class="a" style="left:370px;top:0;width:1px;height:683px;background:#d8dbe9"></div>
<div class="a" style="left:520px;top:0;width:1px;height:683px;background:#d8dbe9"></div>
<div class="a" style="left:649px;top:0;width:1px;height:683px;background:#d8dbe9"></div>
<div class="a" style="left:711px;top:0;width:1px;height:683px;background:#d8dbe9"></div>
<div class="a" style="left:773px;top:0;width:1px;height:683px;background:#d8dbe9"></div>
<div class="a" style="left:835px;top:0;width:1px;height:683px;background:#d8dbe9"></div>
<div class="a" style="left:897px;top:0;width:1px;height:683px;background:#d8dbe9"></div>
<div class="a" style="left:959px;top:0;width:1px;height:683px;background:#c4c4c8"></div>
<div class="a" style="left:1021px;top:0;width:1px;height:683px;background:#d8dbe9"></div>
<div class="a" style="left:1083px;top:0;width:1px;height:683px;background:#d8dbe9"></div>
<div class="a" style="left:1145px;top:0;width:1px;height:683px;background:#d8dbe9"></div>
<div class="a" style="left:1207px;top:0;width:1px;height:683px;background:#d8dbe9"></div>
<div class="a" style="left:1269px;top:0;width:1px;height:683px;background:#d8dbe9"></div>
<div class="a" style="left:1331px;top:0;width:1px;height:683px;background:#d8dbe9"></div>
<div class="a" style="left:1393px;top:0;width:1px;height:683px;background:#c4c4c8"></div>
<div class="a" style="left:1455px;top:0;width:1px;height:683px;background:#d8dbe9"></div>
<div class="a" style="left:1517px;top:0;width:1px;height:683px;background:#d8dbe9"></div>
<div class="a" style="left:1579px;top:0;width:1px;height:683px;background:#d8dbe9"></div>
<div class="a" style="left:1641px;top:0;width:1px;height:683px;background:#d8dbe9"></div>
<div class="a" style="left:600px;top:0;width:1px;height:683px;background:#c3c3c7"></div>
<div class="t" style="left:-1px;top:10px;width:51px;text-align:center;font-size:13px;color:#303030">1</div>
<div class="t" style="left:61px;top:10px;font-size:13px;color:#303030">HDG001400119</div>
<div class="t" style="left:181px;top:10px;font-size:13px;color:#303030">Phương Mỹ Chi</div>
<div class="t" style="left:370px;top:10px;width:150px;text-align:center;font-size:13.3px;color:#303030">20/10/2010</div>
<div class="t" style="left:521px;top:10px;width:68px;text-align:right;font-size:13.3px;color:#303030">0,00</div>
<div class="a" style="left:609px;top:8px;width:18px;height:18px;border:1px solid #c6c6c6;border-radius:50%;background:#fff"></div>
<div class="a" style="left:795px;top:8px;width:18px;height:18px;border:1px solid #c6c6c6;border-radius:50%;background:#fff"></div>
<div class="a" style="left:981px;top:8px;width:18px;height:18px;border:1px solid #c6c6c6;border-radius:50%;background:#fff"></div>
<div class="a" style="left:1043px;top:8px;width:18px;height:18px;border:1px solid #c6c6c6;border-radius:50%;background:#fff"></div>
<div class="a" style="left:1105px;top:8px;width:18px;height:18px;border:1px solid #c6c6c6;border-radius:50%;background:#fff"></div>
<div class="a" style="left:1167px;top:8px;width:18px;height:18px;border:1px solid #c6c6c6;border-radius:50%;background:#fff"></div>
<div class="a" style="left:1229px;top:8px;width:18px;height:18px;border:1px solid #c6c6c6;border-radius:50%;background:#fff"></div>
<div class="a" style="left:1415px;top:8px;width:18px;height:18px;border:1px solid #c6c6c6;border-radius:50%;background:#fff"></div>
<div class="a" style="left:1477px;top:8px;width:18px;height:18px;border:1px solid #c6c6c6;border-radius:50%;background:#fff"></div>
<div class="a" style="left:1539px;top:8px;width:18px;height:18px;border:1px solid #c6c6c6;border-radius:50%;background:#fff"></div>
<div class="a" style="left:1601px;top:8px;width:18px;height:18px;border:1px solid #c6c6c6;border-radius:50%;background:#fff"></div>
<svg class="a" style="left:1653px;top:8px;z-index:1" width="16" height="17" viewBox="0 0 16 17" fill="none" stroke="#707070" stroke-width="1.5"><path d="M0.3 3.8 H15.7" stroke-width="1.6"/><path d="M3.9 3.2 L4.9 1.2 H11.1 L12.1 3.2 Z" fill="#707070" stroke-width="0.8"/><path d="M2.9 4.4 V13.6 Q2.9 15.6 4.9 15.6 H11.1 Q13.1 15.6 13.1 13.6 V4.4"/><path d="M5.4 7 V13 M8 7 V13 M10.5 7 V13" stroke-width="1.3" stroke-linecap="round"/></svg>
<div class="t" style="left:-1px;top:44px;width:51px;text-align:center;font-size:13px;color:#303030">2</div>
<div class="t" style="left:61px;top:44px;font-size:13px;color:#303030">HDG001400120</div>
<div class="t" style="left:181px;top:44px;font-size:13px;color:#303030">Phạm Thành Công</div>
<div class="t" style="left:370px;top:44px;width:150px;text-align:center;font-size:13.3px;color:#303030">05/10/2010</div>
<div class="t" style="left:521px;top:44px;width:68px;text-align:right;font-size:13.3px;color:#303030">0,00</div>
<div class="a" style="left:609px;top:42px;width:18px;height:18px;border:1px solid #c6c6c6;border-radius:50%;background:#fff"></div>
<div class="a" style="left:795px;top:42px;width:18px;height:18px;border:1px solid #c6c6c6;border-radius:50%;background:#fff"></div>
<div class="a" style="left:981px;top:42px;width:18px;height:18px;border:1px solid #c6c6c6;border-radius:50%;background:#fff"></div>
<div class="a" style="left:1043px;top:42px;width:18px;height:18px;border:1px solid #c6c6c6;border-radius:50%;background:#fff"></div>
<div class="a" style="left:1105px;top:42px;width:18px;height:18px;border:1px solid #c6c6c6;border-radius:50%;background:#fff"></div>
<div class="a" style="left:1167px;top:42px;width:18px;height:18px;border:1px solid #c6c6c6;border-radius:50%;background:#fff"></div>
<div class="a" style="left:1229px;top:42px;width:18px;height:18px;border:1px solid #c6c6c6;border-radius:50%;background:#fff"></div>
<div class="a" style="left:1415px;top:42px;width:18px;height:18px;border:1px solid #c6c6c6;border-radius:50%;background:#fff"></div>
<div class="a" style="left:1477px;top:42px;width:18px;height:18px;border:1px solid #c6c6c6;border-radius:50%;background:#fff"></div>
<div class="a" style="left:1539px;top:42px;width:18px;height:18px;border:1px solid #c6c6c6;border-radius:50%;background:#fff"></div>
<div class="a" style="left:1601px;top:42px;width:18px;height:18px;border:1px solid #c6c6c6;border-radius:50%;background:#fff"></div>
<svg class="a" style="left:1653px;top:42px;z-index:1" width="16" height="17" viewBox="0 0 16 17" fill="none" stroke="#707070" stroke-width="1.5"><path d="M0.3 3.8 H15.7" stroke-width="1.6"/><path d="M3.9 3.2 L4.9 1.2 H11.1 L12.1 3.2 Z" fill="#707070" stroke-width="0.8"/><path d="M2.9 4.4 V13.6 Q2.9 15.6 4.9 15.6 H11.1 Q13.1 15.6 13.1 13.6 V4.4"/><path d="M5.4 7 V13 M8 7 V13 M10.5 7 V13" stroke-width="1.3" stroke-linecap="round"/></svg>
<div class="t" style="left:-1px;top:78px;width:51px;text-align:center;font-size:13px;color:#303030">3</div>
<div class="t" style="left:61px;top:78px;font-size:13px;color:#303030">HDG001400121</div>
<div class="t" style="left:181px;top:78px;font-size:13px;color:#303030">Phạm Thị Hồng Hà</div>
<div class="t" style="left:370px;top:78px;width:150px;text-align:center;font-size:13.3px;color:#303030">06/10/2010</div>
<div class="t" style="left:521px;top:78px;width:68px;text-align:right;font-size:13.3px;color:#303030">0,00</div>
<div class="a" style="left:609px;top:76px;width:18px;height:18px;border:1px solid #c6c6c6;border-radius:50%;background:#fff"></div>
<div class="a" style="left:795px;top:76px;width:18px;height:18px;border:1px solid #c6c6c6;border-radius:50%;background:#fff"></div>
<div class="a" style="left:981px;top:76px;width:18px;height:18px;border:1px solid #c6c6c6;border-radius:50%;background:#fff"></div>
<div class="a" style="left:1043px;top:76px;width:18px;height:18px;border:1px solid #c6c6c6;border-radius:50%;background:#fff"></div>
<div class="a" style="left:1105px;top:76px;width:18px;height:18px;border:1px solid #c6c6c6;border-radius:50%;background:#fff"></div>
<div class="a" style="left:1167px;top:76px;width:18px;height:18px;border:1px solid #c6c6c6;border-radius:50%;background:#fff"></div>
<div class="a" style="left:1229px;top:76px;width:18px;height:18px;border:1px solid #c6c6c6;border-radius:50%;background:#fff"></div>
<div class="a" style="left:1415px;top:76px;width:18px;height:18px;border:1px solid #c6c6c6;border-radius:50%;background:#fff"></div>
<div class="a" style="left:1477px;top:76px;width:18px;height:18px;border:1px solid #c6c6c6;border-radius:50%;background:#fff"></div>
<div class="a" style="left:1539px;top:76px;width:18px;height:18px;border:1px solid #c6c6c6;border-radius:50%;background:#fff"></div>
<div class="a" style="left:1601px;top:76px;width:18px;height:18px;border:1px solid #c6c6c6;border-radius:50%;background:#fff"></div>
<svg class="a" style="left:1653px;top:76px;z-index:1" width="16" height="17" viewBox="0 0 16 17" fill="none" stroke="#707070" stroke-width="1.5"><path d="M0.3 3.8 H15.7" stroke-width="1.6"/><path d="M3.9 3.2 L4.9 1.2 H11.1 L12.1 3.2 Z" fill="#707070" stroke-width="0.8"/><path d="M2.9 4.4 V13.6 Q2.9 15.6 4.9 15.6 H11.1 Q13.1 15.6 13.1 13.6 V4.4"/><path d="M5.4 7 V13 M8 7 V13 M10.5 7 V13" stroke-width="1.3" stroke-linecap="round"/></svg>
<div class="t" style="left:-1px;top:112px;width:51px;text-align:center;font-size:13px;color:#303030">4</div>
<div class="t" style="left:61px;top:112px;font-size:13px;color:#303030">HDG001400122</div>
<div class="t" style="left:181px;top:112px;font-size:13px;color:#303030">Trần Anh Tuấn</div>
<div class="t" style="left:370px;top:112px;width:150px;text-align:center;font-size:13.3px;color:#303030">07/10/2010</div>
<div class="t" style="left:521px;top:112px;width:68px;text-align:right;font-size:13.3px;color:#303030">0,00</div>
<div class="a" style="left:609px;top:110px;width:18px;height:18px;border:1px solid #c6c6c6;border-radius:50%;background:#fff"></div>
<div class="a" style="left:795px;top:110px;width:18px;height:18px;border:1px solid #c6c6c6;border-radius:50%;background:#fff"></div>
<div class="a" style="left:981px;top:110px;width:18px;height:18px;border:1px solid #c6c6c6;border-radius:50%;background:#fff"></div>
<div class="a" style="left:1043px;top:110px;width:18px;height:18px;border:1px solid #c6c6c6;border-radius:50%;background:#fff"></div>
<div class="a" style="left:1105px;top:110px;width:18px;height:18px;border:1px solid #c6c6c6;border-radius:50%;background:#fff"></div>
<div class="a" style="left:1167px;top:110px;width:18px;height:18px;border:1px solid #c6c6c6;border-radius:50%;background:#fff"></div>
<div class="a" style="left:1229px;top:110px;width:18px;height:18px;border:1px solid #c6c6c6;border-radius:50%;background:#fff"></div>
<div class="a" style="left:1415px;top:110px;width:18px;height:18px;border:1px solid #c6c6c6;border-radius:50%;background:#fff"></div>
<div class="a" style="left:1477px;top:110px;width:18px;height:18px;border:1px solid #c6c6c6;border-radius:50%;background:#fff"></div>
<div class="a" style="left:1539px;top:110px;width:18px;height:18px;border:1px solid #c6c6c6;border-radius:50%;background:#fff"></div>
<div class="a" style="left:1601px;top:110px;width:18px;height:18px;border:1px solid #c6c6c6;border-radius:50%;background:#fff"></div>
<svg class="a" style="left:1653px;top:110px;z-index:1" width="16" height="17" viewBox="0 0 16 17" fill="none" stroke="#707070" stroke-width="1.5"><path d="M0.3 3.8 H15.7" stroke-width="1.6"/><path d="M3.9 3.2 L4.9 1.2 H11.1 L12.1 3.2 Z" fill="#707070" stroke-width="0.8"/><path d="M2.9 4.4 V13.6 Q2.9 15.6 4.9 15.6 H11.1 Q13.1 15.6 13.1 13.6 V4.4"/><path d="M5.4 7 V13 M8 7 V13 M10.5 7 V13" stroke-width="1.3" stroke-linecap="round"/></svg>
<div class="t" style="left:-1px;top:146px;width:51px;text-align:center;font-size:13px;color:#303030">5</div>
<div class="t" style="left:61px;top:146px;font-size:13px;color:#303030">HDG001400123</div>
<div class="t" style="left:181px;top:146px;font-size:13px;color:#303030">Nguyễn Thị Kiều</div>
<div class="t" style="left:370px;top:146px;width:150px;text-align:center;font-size:13.3px;color:#303030">11/10/2010</div>
<div class="t" style="left:521px;top:146px;width:68px;text-align:right;font-size:13.3px;color:#303030">0,00</div>
<div class="a" style="left:609px;top:144px;width:18px;height:18px;border:1px solid #c6c6c6;border-radius:50%;background:#fff"></div>
<div class="a" style="left:795px;top:144px;width:18px;height:18px;border:1px solid #c6c6c6;border-radius:50%;background:#fff"></div>
<div class="a" style="left:981px;top:144px;width:18px;height:18px;border:1px solid #c6c6c6;border-radius:50%;background:#fff"></div>
<div class="a" style="left:1043px;top:144px;width:18px;height:18px;border:1px solid #c6c6c6;border-radius:50%;background:#fff"></div>
<div class="a" style="left:1105px;top:144px;width:18px;height:18px;border:1px solid #c6c6c6;border-radius:50%;background:#fff"></div>
<div class="a" style="left:1167px;top:144px;width:18px;height:18px;border:1px solid #c6c6c6;border-radius:50%;background:#fff"></div>
<div class="a" style="left:1229px;top:144px;width:18px;height:18px;border:1px solid #c6c6c6;border-radius:50%;background:#fff"></div>
<div class="a" style="left:1415px;top:144px;width:18px;height:18px;border:1px solid #c6c6c6;border-radius:50%;background:#fff"></div>
<div class="a" style="left:1477px;top:144px;width:18px;height:18px;border:1px solid #c6c6c6;border-radius:50%;background:#fff"></div>
<div class="a" style="left:1539px;top:144px;width:18px;height:18px;border:1px solid #c6c6c6;border-radius:50%;background:#fff"></div>
<div class="a" style="left:1601px;top:144px;width:18px;height:18px;border:1px solid #c6c6c6;border-radius:50%;background:#fff"></div>
<svg class="a" style="left:1653px;top:144px;z-index:1" width="16" height="17" viewBox="0 0 16 17" fill="none" stroke="#707070" stroke-width="1.5"><path d="M0.3 3.8 H15.7" stroke-width="1.6"/><path d="M3.9 3.2 L4.9 1.2 H11.1 L12.1 3.2 Z" fill="#707070" stroke-width="0.8"/><path d="M2.9 4.4 V13.6 Q2.9 15.6 4.9 15.6 H11.1 Q13.1 15.6 13.1 13.6 V4.4"/><path d="M5.4 7 V13 M8 7 V13 M10.5 7 V13" stroke-width="1.3" stroke-linecap="round"/></svg>
<div class="t" style="left:-1px;top:180px;width:51px;text-align:center;font-size:13px;color:#303030">6</div>
<div class="t" style="left:61px;top:180px;font-size:13px;color:#303030">HDG001400124</div>
<div class="t" style="left:181px;top:180px;font-size:13px;color:#303030">Vũ Thị Thu Hoa</div>
<div class="t" style="left:370px;top:180px;width:150px;text-align:center;font-size:13.3px;color:#303030">11/10/2010</div>
<div class="t" style="left:521px;top:180px;width:68px;text-align:right;font-size:13.3px;color:#303030">0,00</div>
<div class="a" style="left:609px;top:178px;width:18px;height:18px;border:1px solid #c6c6c6;border-radius:50%;background:#fff"></div>
<div class="a" style="left:795px;top:178px;width:18px;height:18px;border:1px solid #c6c6c6;border-radius:50%;background:#fff"></div>
<div class="a" style="left:981px;top:178px;width:18px;height:18px;border:1px solid #c6c6c6;border-radius:50%;background:#fff"></div>
<div class="a" style="left:1043px;top:178px;width:18px;height:18px;border:1px solid #c6c6c6;border-radius:50%;background:#fff"></div>
<div class="a" style="left:1105px;top:178px;width:18px;height:18px;border:1px solid #c6c6c6;border-radius:50%;background:#fff"></div>
<div class="a" style="left:1167px;top:178px;width:18px;height:18px;border:1px solid #c6c6c6;border-radius:50%;background:#fff"></div>
<div class="a" style="left:1229px;top:178px;width:18px;height:18px;border:1px solid #c6c6c6;border-radius:50%;background:#fff"></div>
<div class="a" style="left:1415px;top:178px;width:18px;height:18px;border:1px solid #c6c6c6;border-radius:50%;background:#fff"></div>
<div class="a" style="left:1477px;top:178px;width:18px;height:18px;border:1px solid #c6c6c6;border-radius:50%;background:#fff"></div>
<div class="a" style="left:1539px;top:178px;width:18px;height:18px;border:1px solid #c6c6c6;border-radius:50%;background:#fff"></div>
<div class="a" style="left:1601px;top:178px;width:18px;height:18px;border:1px solid #c6c6c6;border-radius:50%;background:#fff"></div>
<svg class="a" style="left:1653px;top:178px;z-index:1" width="16" height="17" viewBox="0 0 16 17" fill="none" stroke="#707070" stroke-width="1.5"><path d="M0.3 3.8 H15.7" stroke-width="1.6"/><path d="M3.9 3.2 L4.9 1.2 H11.1 L12.1 3.2 Z" fill="#707070" stroke-width="0.8"/><path d="M2.9 4.4 V13.6 Q2.9 15.6 4.9 15.6 H11.1 Q13.1 15.6 13.1 13.6 V4.4"/><path d="M5.4 7 V13 M8 7 V13 M10.5 7 V13" stroke-width="1.3" stroke-linecap="round"/></svg>
<div class="t" style="left:-1px;top:214px;width:51px;text-align:center;font-size:13px;color:#303030">7</div>
<div class="t" style="left:61px;top:214px;font-size:13px;color:#303030">HDG001400125</div>
<div class="t" style="left:181px;top:214px;font-size:13px;color:#303030">Lê Thị Mai Hoa</div>
<div class="t" style="left:370px;top:214px;width:150px;text-align:center;font-size:13.3px;color:#303030">11/10/2010</div>
<div class="t" style="left:521px;top:214px;width:68px;text-align:right;font-size:13.3px;color:#303030">0,00</div>
<div class="a" style="left:609px;top:212px;width:18px;height:18px;border:1px solid #c6c6c6;border-radius:50%;background:#fff"></div>
<div class="a" style="left:795px;top:212px;width:18px;height:18px;border:1px solid #c6c6c6;border-radius:50%;background:#fff"></div>
<div class="a" style="left:981px;top:212px;width:18px;height:18px;border:1px solid #c6c6c6;border-radius:50%;background:#fff"></div>
<div class="a" style="left:1043px;top:212px;width:18px;height:18px;border:1px solid #c6c6c6;border-radius:50%;background:#fff"></div>
<div class="a" style="left:1105px;top:212px;width:18px;height:18px;border:1px solid #c6c6c6;border-radius:50%;background:#fff"></div>
<div class="a" style="left:1167px;top:212px;width:18px;height:18px;border:1px solid #c6c6c6;border-radius:50%;background:#fff"></div>
<div class="a" style="left:1229px;top:212px;width:18px;height:18px;border:1px solid #c6c6c6;border-radius:50%;background:#fff"></div>
<div class="a" style="left:1415px;top:212px;width:18px;height:18px;border:1px solid #c6c6c6;border-radius:50%;background:#fff"></div>
<div class="a" style="left:1477px;top:212px;width:18px;height:18px;border:1px solid #c6c6c6;border-radius:50%;background:#fff"></div>
<div class="a" style="left:1539px;top:212px;width:18px;height:18px;border:1px solid #c6c6c6;border-radius:50%;background:#fff"></div>
<div class="a" style="left:1601px;top:212px;width:18px;height:18px;border:1px solid #c6c6c6;border-radius:50%;background:#fff"></div>
<svg class="a" style="left:1653px;top:212px;z-index:1" width="16" height="17" viewBox="0 0 16 17" fill="none" stroke="#707070" stroke-width="1.5"><path d="M0.3 3.8 H15.7" stroke-width="1.6"/><path d="M3.9 3.2 L4.9 1.2 H11.1 L12.1 3.2 Z" fill="#707070" stroke-width="0.8"/><path d="M2.9 4.4 V13.6 Q2.9 15.6 4.9 15.6 H11.1 Q13.1 15.6 13.1 13.6 V4.4"/><path d="M5.4 7 V13 M8 7 V13 M10.5 7 V13" stroke-width="1.3" stroke-linecap="round"/></svg>
<div class="t" style="left:-1px;top:248px;width:51px;text-align:center;font-size:13px;color:#303030">8</div>
<div class="t" style="left:61px;top:248px;font-size:13px;color:#303030">HDG001400126</div>
<div class="t" style="left:181px;top:248px;font-size:13px;color:#303030">Lê Văn An</div>
<div class="t" style="left:370px;top:248px;width:150px;text-align:center;font-size:13.3px;color:#303030">12/10/2010</div>
<div class="t" style="left:521px;top:248px;width:68px;text-align:right;font-size:13.3px;color:#303030">0,00</div>
<div class="a" style="left:609px;top:246px;width:18px;height:18px;border:1px solid #c6c6c6;border-radius:50%;background:#fff"></div>
<div class="a" style="left:795px;top:246px;width:18px;height:18px;border:1px solid #c6c6c6;border-radius:50%;background:#fff"></div>
<div class="a" style="left:981px;top:246px;width:18px;height:18px;border:1px solid #c6c6c6;border-radius:50%;background:#fff"></div>
<div class="a" style="left:1043px;top:246px;width:18px;height:18px;border:1px solid #c6c6c6;border-radius:50%;background:#fff"></div>
<div class="a" style="left:1105px;top:246px;width:18px;height:18px;border:1px solid #c6c6c6;border-radius:50%;background:#fff"></div>
<div class="a" style="left:1167px;top:246px;width:18px;height:18px;border:1px solid #c6c6c6;border-radius:50%;background:#fff"></div>
<div class="a" style="left:1229px;top:246px;width:18px;height:18px;border:1px solid #c6c6c6;border-radius:50%;background:#fff"></div>
<div class="a" style="left:1415px;top:246px;width:18px;height:18px;border:1px solid #c6c6c6;border-radius:50%;background:#fff"></div>
<div class="a" style="left:1477px;top:246px;width:18px;height:18px;border:1px solid #c6c6c6;border-radius:50%;background:#fff"></div>
<div class="a" style="left:1539px;top:246px;width:18px;height:18px;border:1px solid #c6c6c6;border-radius:50%;background:#fff"></div>
<div class="a" style="left:1601px;top:246px;width:18px;height:18px;border:1px solid #c6c6c6;border-radius:50%;background:#fff"></div>
<svg class="a" style="left:1653px;top:246px;z-index:1" width="16" height="17" viewBox="0 0 16 17" fill="none" stroke="#707070" stroke-width="1.5"><path d="M0.3 3.8 H15.7" stroke-width="1.6"/><path d="M3.9 3.2 L4.9 1.2 H11.1 L12.1 3.2 Z" fill="#707070" stroke-width="0.8"/><path d="M2.9 4.4 V13.6 Q2.9 15.6 4.9 15.6 H11.1 Q13.1 15.6 13.1 13.6 V4.4"/><path d="M5.4 7 V13 M8 7 V13 M10.5 7 V13" stroke-width="1.3" stroke-linecap="round"/></svg>
<div class="t" style="left:-1px;top:282px;width:51px;text-align:center;font-size:13px;color:#303030">9</div>
<div class="t" style="left:61px;top:282px;font-size:13px;color:#303030">HDG001400127</div>
<div class="t" style="left:181px;top:282px;font-size:13px;color:#303030">Nguyễn Ngọc Huy</div>
<div class="t" style="left:370px;top:282px;width:150px;text-align:center;font-size:13.3px;color:#303030">13/10/2010</div>
<div class="t" style="left:521px;top:282px;width:68px;text-align:right;font-size:13.3px;color:#303030">0,00</div>
<div class="a" style="left:609px;top:280px;width:18px;height:18px;border:1px solid #c6c6c6;border-radius:50%;background:#fff"></div>
<div class="a" style="left:795px;top:280px;width:18px;height:18px;border:1px solid #c6c6c6;border-radius:50%;background:#fff"></div>
<div class="a" style="left:981px;top:280px;width:18px;height:18px;border:1px solid #c6c6c6;border-radius:50%;background:#fff"></div>
<div class="a" style="left:1043px;top:280px;width:18px;height:18px;border:1px solid #c6c6c6;border-radius:50%;background:#fff"></div>
<div class="a" style="left:1105px;top:280px;width:18px;height:18px;border:1px solid #c6c6c6;border-radius:50%;background:#fff"></div>
<div class="a" style="left:1167px;top:280px;width:18px;height:18px;border:1px solid #c6c6c6;border-radius:50%;background:#fff"></div>
<div class="a" style="left:1229px;top:280px;width:18px;height:18px;border:1px solid #c6c6c6;border-radius:50%;background:#fff"></div>
<div class="a" style="left:1415px;top:280px;width:18px;height:18px;border:1px solid #c6c6c6;border-radius:50%;background:#fff"></div>
<div class="a" style="left:1477px;top:280px;width:18px;height:18px;border:1px solid #c6c6c6;border-radius:50%;background:#fff"></div>
<div class="a" style="left:1539px;top:280px;width:18px;height:18px;border:1px solid #c6c6c6;border-radius:50%;background:#fff"></div>
<div class="a" style="left:1601px;top:280px;width:18px;height:18px;border:1px solid #c6c6c6;border-radius:50%;background:#fff"></div>
<svg class="a" style="left:1653px;top:280px;z-index:1" width="16" height="17" viewBox="0 0 16 17" fill="none" stroke="#707070" stroke-width="1.5"><path d="M0.3 3.8 H15.7" stroke-width="1.6"/><path d="M3.9 3.2 L4.9 1.2 H11.1 L12.1 3.2 Z" fill="#707070" stroke-width="0.8"/><path d="M2.9 4.4 V13.6 Q2.9 15.6 4.9 15.6 H11.1 Q13.1 15.6 13.1 13.6 V4.4"/><path d="M5.4 7 V13 M8 7 V13 M10.5 7 V13" stroke-width="1.3" stroke-linecap="round"/></svg>
<div class="t" style="left:-1px;top:316px;width:51px;text-align:center;font-size:13px;color:#303030">10</div>
<div class="t" style="left:61px;top:316px;font-size:13px;color:#303030">HDG001400128</div>
<div class="t" style="left:181px;top:316px;font-size:13px;color:#303030">Phạm Minh Khang</div>
<div class="t" style="left:370px;top:316px;width:150px;text-align:center;font-size:13.3px;color:#303030">14/10/2010</div>
<div class="t" style="left:521px;top:316px;width:68px;text-align:right;font-size:13.3px;color:#303030">0,00</div>
<div class="a" style="left:609px;top:314px;width:18px;height:18px;border:1px solid #c6c6c6;border-radius:50%;background:#fff"></div>
<div class="a" style="left:795px;top:314px;width:18px;height:18px;border:1px solid #c6c6c6;border-radius:50%;background:#fff"></div>
<div class="a" style="left:981px;top:314px;width:18px;height:18px;border:1px solid #c6c6c6;border-radius:50%;background:#fff"></div>
<div class="a" style="left:1043px;top:314px;width:18px;height:18px;border:1px solid #c6c6c6;border-radius:50%;background:#fff"></div>
<div class="a" style="left:1105px;top:314px;width:18px;height:18px;border:1px solid #c6c6c6;border-radius:50%;background:#fff"></div>
<div class="a" style="left:1167px;top:314px;width:18px;height:18px;border:1px solid #c6c6c6;border-radius:50%;background:#fff"></div>
<div class="a" style="left:1229px;top:314px;width:18px;height:18px;border:1px solid #c6c6c6;border-radius:50%;background:#fff"></div>
<div class="a" style="left:1415px;top:314px;width:18px;height:18px;border:1px solid #c6c6c6;border-radius:50%;background:#fff"></div>
<div class="a" style="left:1477px;top:314px;width:18px;height:18px;border:1px solid #c6c6c6;border-radius:50%;background:#fff"></div>
<div class="a" style="left:1539px;top:314px;width:18px;height:18px;border:1px solid #c6c6c6;border-radius:50%;background:#fff"></div>
<div class="a" style="left:1601px;top:314px;width:18px;height:18px;border:1px solid #c6c6c6;border-radius:50%;background:#fff"></div>
<svg class="a" style="left:1653px;top:314px;z-index:1" width="16" height="17" viewBox="0 0 16 17" fill="none" stroke="#707070" stroke-width="1.5"><path d="M0.3 3.8 H15.7" stroke-width="1.6"/><path d="M3.9 3.2 L4.9 1.2 H11.1 L12.1 3.2 Z" fill="#707070" stroke-width="0.8"/><path d="M2.9 4.4 V13.6 Q2.9 15.6 4.9 15.6 H11.1 Q13.1 15.6 13.1 13.6 V4.4"/><path d="M5.4 7 V13 M8 7 V13 M10.5 7 V13" stroke-width="1.3" stroke-linecap="round"/></svg>
<div class="t" style="left:-1px;top:350px;width:51px;text-align:center;font-size:13px;color:#303030">11</div>
<div class="t" style="left:61px;top:350px;font-size:13px;color:#303030">HDG001400129</div>
<div class="t" style="left:181px;top:350px;font-size:13px;color:#303030">Nguyễn Hoàng Linh</div>
<div class="t" style="left:370px;top:350px;width:150px;text-align:center;font-size:13.3px;color:#303030">17/10/2010</div>
<div class="t" style="left:521px;top:350px;width:68px;text-align:right;font-size:13.3px;color:#303030">0,00</div>
<div class="a" style="left:609px;top:348px;width:18px;height:18px;border:1px solid #c6c6c6;border-radius:50%;background:#fff"></div>
<div class="a" style="left:795px;top:348px;width:18px;height:18px;border:1px solid #c6c6c6;border-radius:50%;background:#fff"></div>
<div class="a" style="left:981px;top:348px;width:18px;height:18px;border:1px solid #c6c6c6;border-radius:50%;background:#fff"></div>
<div class="a" style="left:1043px;top:348px;width:18px;height:18px;border:1px solid #c6c6c6;border-radius:50%;background:#fff"></div>
<div class="a" style="left:1105px;top:348px;width:18px;height:18px;border:1px solid #c6c6c6;border-radius:50%;background:#fff"></div>
<div class="a" style="left:1167px;top:348px;width:18px;height:18px;border:1px solid #c6c6c6;border-radius:50%;background:#fff"></div>
<div class="a" style="left:1229px;top:348px;width:18px;height:18px;border:1px solid #c6c6c6;border-radius:50%;background:#fff"></div>
<div class="a" style="left:1415px;top:348px;width:18px;height:18px;border:1px solid #c6c6c6;border-radius:50%;background:#fff"></div>
<div class="a" style="left:1477px;top:348px;width:18px;height:18px;border:1px solid #c6c6c6;border-radius:50%;background:#fff"></div>
<div class="a" style="left:1539px;top:348px;width:18px;height:18px;border:1px solid #c6c6c6;border-radius:50%;background:#fff"></div>
<div class="a" style="left:1601px;top:348px;width:18px;height:18px;border:1px solid #c6c6c6;border-radius:50%;background:#fff"></div>
<svg class="a" style="left:1653px;top:348px;z-index:1" width="16" height="17" viewBox="0 0 16 17" fill="none" stroke="#707070" stroke-width="1.5"><path d="M0.3 3.8 H15.7" stroke-width="1.6"/><path d="M3.9 3.2 L4.9 1.2 H11.1 L12.1 3.2 Z" fill="#707070" stroke-width="0.8"/><path d="M2.9 4.4 V13.6 Q2.9 15.6 4.9 15.6 H11.1 Q13.1 15.6 13.1 13.6 V4.4"/><path d="M5.4 7 V13 M8 7 V13 M10.5 7 V13" stroke-width="1.3" stroke-linecap="round"/></svg>
<div class="t" style="left:-1px;top:384px;width:51px;text-align:center;font-size:13px;color:#303030">12</div>
<div class="t" style="left:61px;top:384px;font-size:13px;color:#303030">HDG001400130</div>
<div class="t" style="left:181px;top:384px;font-size:13px;color:#303030">Nguyễn Phương Nam</div>
<div class="t" style="left:370px;top:384px;width:150px;text-align:center;font-size:13.3px;color:#303030">18/10/2010</div>
<div class="t" style="left:521px;top:384px;width:68px;text-align:right;font-size:13.3px;color:#303030">0,00</div>
<div class="a" style="left:609px;top:382px;width:18px;height:18px;border:1px solid #c6c6c6;border-radius:50%;background:#fff"></div>
<div class="a" style="left:795px;top:382px;width:18px;height:18px;border:1px solid #c6c6c6;border-radius:50%;background:#fff"></div>
<div class="a" style="left:981px;top:382px;width:18px;height:18px;border:1px solid #c6c6c6;border-radius:50%;background:#fff"></div>
<div class="a" style="left:1043px;top:382px;width:18px;height:18px;border:1px solid #c6c6c6;border-radius:50%;background:#fff"></div>
<div class="a" style="left:1105px;top:382px;width:18px;height:18px;border:1px solid #c6c6c6;border-radius:50%;background:#fff"></div>
<div class="a" style="left:1167px;top:382px;width:18px;height:18px;border:1px solid #c6c6c6;border-radius:50%;background:#fff"></div>
<div class="a" style="left:1229px;top:382px;width:18px;height:18px;border:1px solid #c6c6c6;border-radius:50%;background:#fff"></div>
<div class="a" style="left:1415px;top:382px;width:18px;height:18px;border:1px solid #c6c6c6;border-radius:50%;background:#fff"></div>
<div class="a" style="left:1477px;top:382px;width:18px;height:18px;border:1px solid #c6c6c6;border-radius:50%;background:#fff"></div>
<div class="a" style="left:1539px;top:382px;width:18px;height:18px;border:1px solid #c6c6c6;border-radius:50%;background:#fff"></div>
<div class="a" style="left:1601px;top:382px;width:18px;height:18px;border:1px solid #c6c6c6;border-radius:50%;background:#fff"></div>
<svg class="a" style="left:1653px;top:382px;z-index:1" width="16" height="17" viewBox="0 0 16 17" fill="none" stroke="#707070" stroke-width="1.5"><path d="M0.3 3.8 H15.7" stroke-width="1.6"/><path d="M3.9 3.2 L4.9 1.2 H11.1 L12.1 3.2 Z" fill="#707070" stroke-width="0.8"/><path d="M2.9 4.4 V13.6 Q2.9 15.6 4.9 15.6 H11.1 Q13.1 15.6 13.1 13.6 V4.4"/><path d="M5.4 7 V13 M8 7 V13 M10.5 7 V13" stroke-width="1.3" stroke-linecap="round"/></svg>
<div class="t" style="left:-1px;top:418px;width:51px;text-align:center;font-size:13px;color:#303030">13</div>
<div class="t" style="left:61px;top:418px;font-size:13px;color:#303030">HDG001400131</div>
<div class="t" style="left:181px;top:418px;font-size:13px;color:#303030">Nguyễn Hải Nam</div>
<div class="t" style="left:370px;top:418px;width:150px;text-align:center;font-size:13.3px;color:#303030">18/10/2010</div>
<div class="t" style="left:521px;top:418px;width:68px;text-align:right;font-size:13.3px;color:#303030">0,00</div>
<div class="a" style="left:609px;top:416px;width:18px;height:18px;border:1px solid #c6c6c6;border-radius:50%;background:#fff"></div>
<div class="a" style="left:795px;top:416px;width:18px;height:18px;border:1px solid #c6c6c6;border-radius:50%;background:#fff"></div>
<div class="a" style="left:981px;top:416px;width:18px;height:18px;border:1px solid #c6c6c6;border-radius:50%;background:#fff"></div>
<div class="a" style="left:1043px;top:416px;width:18px;height:18px;border:1px solid #c6c6c6;border-radius:50%;background:#fff"></div>
<div class="a" style="left:1105px;top:416px;width:18px;height:18px;border:1px solid #c6c6c6;border-radius:50%;background:#fff"></div>
<div class="a" style="left:1167px;top:416px;width:18px;height:18px;border:1px solid #c6c6c6;border-radius:50%;background:#fff"></div>
<div class="a" style="left:1229px;top:416px;width:18px;height:18px;border:1px solid #c6c6c6;border-radius:50%;background:#fff"></div>
<div class="a" style="left:1415px;top:416px;width:18px;height:18px;border:1px solid #c6c6c6;border-radius:50%;background:#fff"></div>
<div class="a" style="left:1477px;top:416px;width:18px;height:18px;border:1px solid #c6c6c6;border-radius:50%;background:#fff"></div>
<div class="a" style="left:1539px;top:416px;width:18px;height:18px;border:1px solid #c6c6c6;border-radius:50%;background:#fff"></div>
<div class="a" style="left:1601px;top:416px;width:18px;height:18px;border:1px solid #c6c6c6;border-radius:50%;background:#fff"></div>
<svg class="a" style="left:1653px;top:416px;z-index:1" width="16" height="17" viewBox="0 0 16 17" fill="none" stroke="#707070" stroke-width="1.5"><path d="M0.3 3.8 H15.7" stroke-width="1.6"/><path d="M3.9 3.2 L4.9 1.2 H11.1 L12.1 3.2 Z" fill="#707070" stroke-width="0.8"/><path d="M2.9 4.4 V13.6 Q2.9 15.6 4.9 15.6 H11.1 Q13.1 15.6 13.1 13.6 V4.4"/><path d="M5.4 7 V13 M8 7 V13 M10.5 7 V13" stroke-width="1.3" stroke-linecap="round"/></svg>
<div class="t" style="left:-1px;top:452px;width:51px;text-align:center;font-size:13px;color:#303030">14</div>
<div class="t" style="left:61px;top:452px;font-size:13px;color:#303030">HDG001400133</div>
<div class="t" style="left:181px;top:452px;font-size:13px;color:#303030">Mai Tấn Phát</div>
<div class="t" style="left:370px;top:452px;width:150px;text-align:center;font-size:13.3px;color:#303030">18/10/2010</div>
<div class="t" style="left:521px;top:452px;width:68px;text-align:right;font-size:13.3px;color:#303030">0,00</div>
<div class="a" style="left:609px;top:450px;width:18px;height:18px;border:1px solid #c6c6c6;border-radius:50%;background:#fff"></div>
<div class="a" style="left:795px;top:450px;width:18px;height:18px;border:1px solid #c6c6c6;border-radius:50%;background:#fff"></div>
<div class="a" style="left:981px;top:450px;width:18px;height:18px;border:1px solid #c6c6c6;border-radius:50%;background:#fff"></div>
<div class="a" style="left:1043px;top:450px;width:18px;height:18px;border:1px solid #c6c6c6;border-radius:50%;background:#fff"></div>
<div class="a" style="left:1105px;top:450px;width:18px;height:18px;border:1px solid #c6c6c6;border-radius:50%;background:#fff"></div>
<div class="a" style="left:1167px;top:450px;width:18px;height:18px;border:1px solid #c6c6c6;border-radius:50%;background:#fff"></div>
<div class="a" style="left:1229px;top:450px;width:18px;height:18px;border:1px solid #c6c6c6;border-radius:50%;background:#fff"></div>
<div class="a" style="left:1415px;top:450px;width:18px;height:18px;border:1px solid #c6c6c6;border-radius:50%;background:#fff"></div>
<div class="a" style="left:1477px;top:450px;width:18px;height:18px;border:1px solid #c6c6c6;border-radius:50%;background:#fff"></div>
<div class="a" style="left:1539px;top:450px;width:18px;height:18px;border:1px solid #c6c6c6;border-radius:50%;background:#fff"></div>
<div class="a" style="left:1601px;top:450px;width:18px;height:18px;border:1px solid #c6c6c6;border-radius:50%;background:#fff"></div>
<svg class="a" style="left:1653px;top:450px;z-index:1" width="16" height="17" viewBox="0 0 16 17" fill="none" stroke="#707070" stroke-width="1.5"><path d="M0.3 3.8 H15.7" stroke-width="1.6"/><path d="M3.9 3.2 L4.9 1.2 H11.1 L12.1 3.2 Z" fill="#707070" stroke-width="0.8"/><path d="M2.9 4.4 V13.6 Q2.9 15.6 4.9 15.6 H11.1 Q13.1 15.6 13.1 13.6 V4.4"/><path d="M5.4 7 V13 M8 7 V13 M10.5 7 V13" stroke-width="1.3" stroke-linecap="round"/></svg>
<div class="t" style="left:-1px;top:486px;width:51px;text-align:center;font-size:13px;color:#303030">15</div>
<div class="t" style="left:61px;top:486px;font-size:13px;color:#303030">p6o2yr98</div>
<div class="t" style="left:181px;top:486px;font-size:13px;color:#303030">Phạm Minh Tâm</div>
<div class="t" style="left:370px;top:486px;width:150px;text-align:center;font-size:13.3px;color:#303030">12/11/2008</div>
<div class="t" style="left:521px;top:486px;width:68px;text-align:right;font-size:13.3px;color:#303030">0,00</div>
<div class="a" style="left:609px;top:484px;width:18px;height:18px;border:1px solid #c6c6c6;border-radius:50%;background:#fff"></div>
<div class="a" style="left:795px;top:484px;width:18px;height:18px;border:1px solid #c6c6c6;border-radius:50%;background:#fff"></div>
<div class="a" style="left:981px;top:484px;width:18px;height:18px;border:1px solid #c6c6c6;border-radius:50%;background:#fff"></div>
<div class="a" style="left:1043px;top:484px;width:18px;height:18px;border:1px solid #c6c6c6;border-radius:50%;background:#fff"></div>
<div class="a" style="left:1105px;top:484px;width:18px;height:18px;border:1px solid #c6c6c6;border-radius:50%;background:#fff"></div>
<div class="a" style="left:1167px;top:484px;width:18px;height:18px;border:1px solid #c6c6c6;border-radius:50%;background:#fff"></div>
<div class="a" style="left:1229px;top:484px;width:18px;height:18px;border:1px solid #c6c6c6;border-radius:50%;background:#fff"></div>
<div class="a" style="left:1415px;top:484px;width:18px;height:18px;border:1px solid #c6c6c6;border-radius:50%;background:#fff"></div>
<div class="a" style="left:1477px;top:484px;width:18px;height:18px;border:1px solid #c6c6c6;border-radius:50%;background:#fff"></div>
<div class="a" style="left:1539px;top:484px;width:18px;height:18px;border:1px solid #c6c6c6;border-radius:50%;background:#fff"></div>
<div class="a" style="left:1601px;top:484px;width:18px;height:18px;border:1px solid #c6c6c6;border-radius:50%;background:#fff"></div>
<svg class="a" style="left:1653px;top:484px;z-index:1" width="16" height="17" viewBox="0 0 16 17" fill="none" stroke="#707070" stroke-width="1.5"><path d="M0.3 3.8 H15.7" stroke-width="1.6"/><path d="M3.9 3.2 L4.9 1.2 H11.1 L12.1 3.2 Z" fill="#707070" stroke-width="0.8"/><path d="M2.9 4.4 V13.6 Q2.9 15.6 4.9 15.6 H11.1 Q13.1 15.6 13.1 13.6 V4.4"/><path d="M5.4 7 V13 M8 7 V13 M10.5 7 V13" stroke-width="1.3" stroke-linecap="round"/></svg>
<div class="t" style="left:-1px;top:520px;width:51px;text-align:center;font-size:13px;color:#303030">16</div>
<div class="t" style="left:61px;top:520px;font-size:13px;color:#303030">HDG001400134</div>
<div class="t" style="left:181px;top:520px;font-size:13px;color:#303030">Phạm Thị Thùy</div>
<div class="t" style="left:370px;top:520px;width:150px;text-align:center;font-size:13.3px;color:#303030">19/10/2010</div>
<div class="t" style="left:521px;top:520px;width:68px;text-align:right;font-size:13.3px;color:#303030">0,00</div>
<div class="a" style="left:609px;top:518px;width:18px;height:18px;border:1px solid #c6c6c6;border-radius:50%;background:#fff"></div>
<div class="a" style="left:795px;top:518px;width:18px;height:18px;border:1px solid #c6c6c6;border-radius:50%;background:#fff"></div>
<div class="a" style="left:981px;top:518px;width:18px;height:18px;border:1px solid #c6c6c6;border-radius:50%;background:#fff"></div>
<div class="a" style="left:1043px;top:518px;width:18px;height:18px;border:1px solid #c6c6c6;border-radius:50%;background:#fff"></div>
<div class="a" style="left:1105px;top:518px;width:18px;height:18px;border:1px solid #c6c6c6;border-radius:50%;background:#fff"></div>
<div class="a" style="left:1167px;top:518px;width:18px;height:18px;border:1px solid #c6c6c6;border-radius:50%;background:#fff"></div>
<div class="a" style="left:1229px;top:518px;width:18px;height:18px;border:1px solid #c6c6c6;border-radius:50%;background:#fff"></div>
<div class="a" style="left:1415px;top:518px;width:18px;height:18px;border:1px solid #c6c6c6;border-radius:50%;background:#fff"></div>
<div class="a" style="left:1477px;top:518px;width:18px;height:18px;border:1px solid #c6c6c6;border-radius:50%;background:#fff"></div>
<div class="a" style="left:1539px;top:518px;width:18px;height:18px;border:1px solid #c6c6c6;border-radius:50%;background:#fff"></div>
<div class="a" style="left:1601px;top:518px;width:18px;height:18px;border:1px solid #c6c6c6;border-radius:50%;background:#fff"></div>
<svg class="a" style="left:1653px;top:518px;z-index:1" width="16" height="17" viewBox="0 0 16 17" fill="none" stroke="#707070" stroke-width="1.5"><path d="M0.3 3.8 H15.7" stroke-width="1.6"/><path d="M3.9 3.2 L4.9 1.2 H11.1 L12.1 3.2 Z" fill="#707070" stroke-width="0.8"/><path d="M2.9 4.4 V13.6 Q2.9 15.6 4.9 15.6 H11.1 Q13.1 15.6 13.1 13.6 V4.4"/><path d="M5.4 7 V13 M8 7 V13 M10.5 7 V13" stroke-width="1.3" stroke-linecap="round"/></svg>
<div class="t" style="left:-1px;top:554px;width:51px;text-align:center;font-size:13px;color:#303030">17</div>
<div class="t" style="left:61px;top:554px;font-size:13px;color:#303030">HDG001400135</div>
<div class="t" style="left:181px;top:554px;font-size:13px;color:#303030">Nguyễn Huyền Trang</div>
<div class="t" style="left:370px;top:554px;width:150px;text-align:center;font-size:13.3px;color:#303030">20/10/2010</div>
<div class="t" style="left:521px;top:554px;width:68px;text-align:right;font-size:13.3px;color:#303030">0,00</div>
<div class="a" style="left:609px;top:552px;width:18px;height:18px;border:1px solid #c6c6c6;border-radius:50%;background:#fff"></div>
<div class="a" style="left:795px;top:552px;width:18px;height:18px;border:1px solid #c6c6c6;border-radius:50%;background:#fff"></div>
<div class="a" style="left:981px;top:552px;width:18px;height:18px;border:1px solid #c6c6c6;border-radius:50%;background:#fff"></div>
<div class="a" style="left:1043px;top:552px;width:18px;height:18px;border:1px solid #c6c6c6;border-radius:50%;background:#fff"></div>
<div class="a" style="left:1105px;top:552px;width:18px;height:18px;border:1px solid #c6c6c6;border-radius:50%;background:#fff"></div>
<div class="a" style="left:1167px;top:552px;width:18px;height:18px;border:1px solid #c6c6c6;border-radius:50%;background:#fff"></div>
<div class="a" style="left:1229px;top:552px;width:18px;height:18px;border:1px solid #c6c6c6;border-radius:50%;background:#fff"></div>
<div class="a" style="left:1415px;top:552px;width:18px;height:18px;border:1px solid #c6c6c6;border-radius:50%;background:#fff"></div>
<div class="a" style="left:1477px;top:552px;width:18px;height:18px;border:1px solid #c6c6c6;border-radius:50%;background:#fff"></div>
<div class="a" style="left:1539px;top:552px;width:18px;height:18px;border:1px solid #c6c6c6;border-radius:50%;background:#fff"></div>
<div class="a" style="left:1601px;top:552px;width:18px;height:18px;border:1px solid #c6c6c6;border-radius:50%;background:#fff"></div>
<svg class="a" style="left:1653px;top:552px;z-index:1" width="16" height="17" viewBox="0 0 16 17" fill="none" stroke="#707070" stroke-width="1.5"><path d="M0.3 3.8 H15.7" stroke-width="1.6"/><path d="M3.9 3.2 L4.9 1.2 H11.1 L12.1 3.2 Z" fill="#707070" stroke-width="0.8"/><path d="M2.9 4.4 V13.6 Q2.9 15.6 4.9 15.6 H11.1 Q13.1 15.6 13.1 13.6 V4.4"/><path d="M5.4 7 V13 M8 7 V13 M10.5 7 V13" stroke-width="1.3" stroke-linecap="round"/></svg>
<div class="t" style="left:-1px;top:588px;width:51px;text-align:center;font-size:13px;color:#303030">18</div>
<div class="t" style="left:61px;top:588px;font-size:13px;color:#303030">HDG001400136</div>
<div class="t" style="left:181px;top:588px;font-size:13px;color:#303030">Phạm Thu Trang</div>
<div class="t" style="left:370px;top:588px;width:150px;text-align:center;font-size:13.3px;color:#303030">21/10/2010</div>
<div class="t" style="left:521px;top:588px;width:68px;text-align:right;font-size:13.3px;color:#303030">0,00</div>
<div class="a" style="left:609px;top:586px;width:18px;height:18px;border:1px solid #c6c6c6;border-radius:50%;background:#fff"></div>
<div class="a" style="left:795px;top:586px;width:18px;height:18px;border:1px solid #c6c6c6;border-radius:50%;background:#fff"></div>
<div class="a" style="left:981px;top:586px;width:18px;height:18px;border:1px solid #c6c6c6;border-radius:50%;background:#fff"></div>
<div class="a" style="left:1043px;top:586px;width:18px;height:18px;border:1px solid #c6c6c6;border-radius:50%;background:#fff"></div>
<div class="a" style="left:1105px;top:586px;width:18px;height:18px;border:1px solid #c6c6c6;border-radius:50%;background:#fff"></div>
<div class="a" style="left:1167px;top:586px;width:18px;height:18px;border:1px solid #c6c6c6;border-radius:50%;background:#fff"></div>
<div class="a" style="left:1229px;top:586px;width:18px;height:18px;border:1px solid #c6c6c6;border-radius:50%;background:#fff"></div>
<div class="a" style="left:1415px;top:586px;width:18px;height:18px;border:1px solid #c6c6c6;border-radius:50%;background:#fff"></div>
<div class="a" style="left:1477px;top:586px;width:18px;height:18px;border:1px solid #c6c6c6;border-radius:50%;background:#fff"></div>
<div class="a" style="left:1539px;top:586px;width:18px;height:18px;border:1px solid #c6c6c6;border-radius:50%;background:#fff"></div>
<div class="a" style="left:1601px;top:586px;width:18px;height:18px;border:1px solid #c6c6c6;border-radius:50%;background:#fff"></div>
<svg class="a" style="left:1653px;top:586px;z-index:1" width="16" height="17" viewBox="0 0 16 17" fill="none" stroke="#707070" stroke-width="1.5"><path d="M0.3 3.8 H15.7" stroke-width="1.6"/><path d="M3.9 3.2 L4.9 1.2 H11.1 L12.1 3.2 Z" fill="#707070" stroke-width="0.8"/><path d="M2.9 4.4 V13.6 Q2.9 15.6 4.9 15.6 H11.1 Q13.1 15.6 13.1 13.6 V4.4"/><path d="M5.4 7 V13 M8 7 V13 M10.5 7 V13" stroke-width="1.3" stroke-linecap="round"/></svg>
<div class="t" style="left:-1px;top:622px;width:51px;text-align:center;font-size:13px;color:#303030">19</div>
<div class="t" style="left:61px;top:622px;font-size:13px;color:#303030">HDG001400137</div>
<div class="t" style="left:181px;top:622px;font-size:13px;color:#303030">Trần Tuấn Tú</div>
<div class="t" style="left:370px;top:622px;width:150px;text-align:center;font-size:13.3px;color:#303030">24/10/2010</div>
<div class="t" style="left:521px;top:622px;width:68px;text-align:right;font-size:13.3px;color:#303030">0,00</div>
<div class="a" style="left:609px;top:620px;width:18px;height:18px;border:1px solid #c6c6c6;border-radius:50%;background:#fff"></div>
<div class="a" style="left:795px;top:620px;width:18px;height:18px;border:1px solid #c6c6c6;border-radius:50%;background:#fff"></div>
<div class="a" style="left:981px;top:620px;width:18px;height:18px;border:1px solid #c6c6c6;border-radius:50%;background:#fff"></div>
<div class="a" style="left:1043px;top:620px;width:18px;height:18px;border:1px solid #c6c6c6;border-radius:50%;background:#fff"></div>
<div class="a" style="left:1105px;top:620px;width:18px;height:18px;border:1px solid #c6c6c6;border-radius:50%;background:#fff"></div>
<div class="a" style="left:1167px;top:620px;width:18px;height:18px;border:1px solid #c6c6c6;border-radius:50%;background:#fff"></div>
<div class="a" style="left:1229px;top:620px;width:18px;height:18px;border:1px solid #c6c6c6;border-radius:50%;background:#fff"></div>
<div class="a" style="left:1415px;top:620px;width:18px;height:18px;border:1px solid #c6c6c6;border-radius:50%;background:#fff"></div>
<div class="a" style="left:1477px;top:620px;width:18px;height:18px;border:1px solid #c6c6c6;border-radius:50%;background:#fff"></div>
<div class="a" style="left:1539px;top:620px;width:18px;height:18px;border:1px solid #c6c6c6;border-radius:50%;background:#fff"></div>
<div class="a" style="left:1601px;top:620px;width:18px;height:18px;border:1px solid #c6c6c6;border-radius:50%;background:#fff"></div>
<svg class="a" style="left:1653px;top:620px;z-index:1" width="16" height="17" viewBox="0 0 16 17" fill="none" stroke="#707070" stroke-width="1.5"><path d="M0.3 3.8 H15.7" stroke-width="1.6"/><path d="M3.9 3.2 L4.9 1.2 H11.1 L12.1 3.2 Z" fill="#707070" stroke-width="0.8"/><path d="M2.9 4.4 V13.6 Q2.9 15.6 4.9 15.6 H11.1 Q13.1 15.6 13.1 13.6 V4.4"/><path d="M5.4 7 V13 M8 7 V13 M10.5 7 V13" stroke-width="1.3" stroke-linecap="round"/></svg>
<div class="t" style="left:-1px;top:656px;width:51px;text-align:center;font-size:13px;color:#303030">20</div>
<div class="t" style="left:61px;top:656px;font-size:13px;color:#303030">HDG001400138</div>
<div class="t" style="left:181px;top:656px;font-size:13px;color:#303030">Vương Anh Tú</div>
<div class="t" style="left:370px;top:656px;width:150px;text-align:center;font-size:13.3px;color:#303030">28/10/2010</div>
<div class="t" style="left:521px;top:656px;width:68px;text-align:right;font-size:13.3px;color:#303030">0,00</div>
<div class="a" style="left:609px;top:654px;width:18px;height:18px;border:1px solid #c6c6c6;border-radius:50%;background:#fff"></div>
<div class="a" style="left:795px;top:654px;width:18px;height:18px;border:1px solid #c6c6c6;border-radius:50%;background:#fff"></div>
<div class="a" style="left:981px;top:654px;width:18px;height:18px;border:1px solid #c6c6c6;border-radius:50%;background:#fff"></div>
<div class="a" style="left:1043px;top:654px;width:18px;height:18px;border:1px solid #c6c6c6;border-radius:50%;background:#fff"></div>
<div class="a" style="left:1105px;top:654px;width:18px;height:18px;border:1px solid #c6c6c6;border-radius:50%;background:#fff"></div>
<div class="a" style="left:1167px;top:654px;width:18px;height:18px;border:1px solid #c6c6c6;border-radius:50%;background:#fff"></div>
<div class="a" style="left:1229px;top:654px;width:18px;height:18px;border:1px solid #c6c6c6;border-radius:50%;background:#fff"></div>
<div class="a" style="left:1415px;top:654px;width:18px;height:18px;border:1px solid #c6c6c6;border-radius:50%;background:#fff"></div>
<div class="a" style="left:1477px;top:654px;width:18px;height:18px;border:1px solid #c6c6c6;border-radius:50%;background:#fff"></div>
<div class="a" style="left:1539px;top:654px;width:18px;height:18px;border:1px solid #c6c6c6;border-radius:50%;background:#fff"></div>
<div class="a" style="left:1601px;top:654px;width:18px;height:18px;border:1px solid #c6c6c6;border-radius:50%;background:#fff"></div>
<svg class="a" style="left:1653px;top:654px;z-index:1" width="16" height="17" viewBox="0 0 16 17" fill="none" stroke="#707070" stroke-width="1.5"><path d="M0.3 3.8 H15.7" stroke-width="1.6"/><path d="M3.9 3.2 L4.9 1.2 H11.1 L12.1 3.2 Z" fill="#707070" stroke-width="0.8"/><path d="M2.9 4.4 V13.6 Q2.9 15.6 4.9 15.6 H11.1 Q13.1 15.6 13.1 13.6 V4.4"/><path d="M5.4 7 V13 M8 7 V13 M10.5 7 V13" stroke-width="1.3" stroke-linecap="round"/></svg>
<div class="t" style="left:-1px;top:690px;width:51px;text-align:center;font-size:13px;color:#303030">21</div>
<div class="t" style="left:61px;top:690px;font-size:13px;color:#303030">HDG001400139</div>
<div class="t" style="left:181px;top:690px;font-size:13px;color:#303030">Lê Văn Bình</div>
<div class="t" style="left:370px;top:690px;width:150px;text-align:center;font-size:13.3px;color:#303030">30/10/2010</div>
<div class="t" style="left:521px;top:690px;width:68px;text-align:right;font-size:13.3px;color:#303030">0,00</div>
<div class="a" style="left:609px;top:688px;width:18px;height:18px;border:1px solid #c6c6c6;border-radius:50%;background:#fff"></div>
<div class="a" style="left:795px;top:688px;width:18px;height:18px;border:1px solid #c6c6c6;border-radius:50%;background:#fff"></div>
<div class="a" style="left:981px;top:688px;width:18px;height:18px;border:1px solid #c6c6c6;border-radius:50%;background:#fff"></div>
<div class="a" style="left:1043px;top:688px;width:18px;height:18px;border:1px solid #c6c6c6;border-radius:50%;background:#fff"></div>
<div class="a" style="left:1105px;top:688px;width:18px;height:18px;border:1px solid #c6c6c6;border-radius:50%;background:#fff"></div>
<div class="a" style="left:1167px;top:688px;width:18px;height:18px;border:1px solid #c6c6c6;border-radius:50%;background:#fff"></div>
<div class="a" style="left:1229px;top:688px;width:18px;height:18px;border:1px solid #c6c6c6;border-radius:50%;background:#fff"></div>
<div class="a" style="left:1415px;top:688px;width:18px;height:18px;border:1px solid #c6c6c6;border-radius:50%;background:#fff"></div>
<div class="a" style="left:1477px;top:688px;width:18px;height:18px;border:1px solid #c6c6c6;border-radius:50%;background:#fff"></div>
<div class="a" style="left:1539px;top:688px;width:18px;height:18px;border:1px solid #c6c6c6;border-radius:50%;background:#fff"></div>
<div class="a" style="left:1601px;top:688px;width:18px;height:18px;border:1px solid #c6c6c6;border-radius:50%;background:#fff"></div>
<svg class="a" style="left:1653px;top:688px;z-index:1" width="16" height="17" viewBox="0 0 16 17" fill="none" stroke="#707070" stroke-width="1.5"><path d="M0.3 3.8 H15.7" stroke-width="1.6"/><path d="M3.9 3.2 L4.9 1.2 H11.1 L12.1 3.2 Z" fill="#707070" stroke-width="0.8"/><path d="M2.9 4.4 V13.6 Q2.9 15.6 4.9 15.6 H11.1 Q13.1 15.6 13.1 13.6 V4.4"/><path d="M5.4 7 V13 M8 7 V13 M10.5 7 V13" stroke-width="1.3" stroke-linecap="round"/></svg>
</div>
<div class="t" style="left:218px;top:133px;width:51px;text-align:center;font-size:13px;font-weight:bold;color:#111;z-index:4">STT</div>
<div class="t" style="left:269px;top:115px;width:120px;text-align:center;font-size:13px;font-weight:bold;color:#111;z-index:4">Mã học sinh</div>
<div class="t" style="left:389px;top:115px;width:200px;text-align:center;font-size:13px;font-weight:bold;color:#111;z-index:4">Họ và tên</div>
<div class="t" style="left:589px;top:115px;width:150px;text-align:center;font-size:13px;font-weight:bold;color:#111;z-index:4">Ngày sinh</div>
<div class="t" style="left:739px;top:133px;width:80px;text-align:center;font-size:13px;font-weight:bold;color:#111;z-index:4">Tổng số</div>
<div class="a" style="left:269px;top:105px;width:1px;height:68px;background:#d8dbe9;z-index:3"></div>
<div class="a" style="left:389px;top:105px;width:1px;height:68px;background:#d8dbe9;z-index:3"></div>
<div class="a" style="left:589px;top:105px;width:1px;height:68px;background:#d8dbe9;z-index:3"></div>
<div class="a" style="left:739px;top:105px;width:1px;height:68px;background:#d8dbe9;z-index:3"></div>
<div class="a" style="left:819px;top:105px;width:1px;height:68px;background:#c3c3c7;z-index:3"></div>
<div class="a" style="left:868px;top:105px;width:1px;height:68px;background:#d8dbe9;z-index:3"></div>
<div class="a" style="left:930px;top:105px;width:1px;height:68px;background:#d8dbe9;z-index:3"></div>
<div class="a" style="left:992px;top:105px;width:1px;height:68px;background:#d8dbe9;z-index:3"></div>
<div class="a" style="left:1054px;top:105px;width:1px;height:68px;background:#d8dbe9;z-index:3"></div>
<div class="a" style="left:1116px;top:105px;width:1px;height:68px;background:#d8dbe9;z-index:3"></div>
<div class="a" style="left:1178px;top:105px;width:1px;height:68px;background:#c4c4c8;z-index:3"></div>
<div class="a" style="left:1240px;top:105px;width:1px;height:68px;background:#d8dbe9;z-index:3"></div>
<div class="a" style="left:1302px;top:105px;width:1px;height:68px;background:#d8dbe9;z-index:3"></div>
<div class="a" style="left:1364px;top:105px;width:1px;height:68px;background:#d8dbe9;z-index:3"></div>
<div class="a" style="left:1426px;top:105px;width:1px;height:68px;background:#d8dbe9;z-index:3"></div>
<div class="a" style="left:1488px;top:105px;width:1px;height:68px;background:#d8dbe9;z-index:3"></div>
<div class="a" style="left:1550px;top:105px;width:1px;height:68px;background:#d8dbe9;z-index:3"></div>
<div class="a" style="left:1612px;top:105px;width:1px;height:68px;background:#c4c4c8;z-index:3"></div>
<div class="a" style="left:1674px;top:105px;width:1px;height:68px;background:#d8dbe9;z-index:3"></div>
<div class="a" style="left:1736px;top:105px;width:1px;height:68px;background:#d8dbe9;z-index:3"></div>
<div class="a" style="left:1798px;top:105px;width:1px;height:68px;background:#d8dbe9;z-index:3"></div>
<div class="a" style="left:1860px;top:105px;width:1px;height:68px;background:#d8dbe9;z-index:3"></div>
<div class="a" style="left:275px;top:142px;width:109px;height:26px;border:1px solid #e0e0e4;border-radius:4px;background:#fff;z-index:3"></div>
<svg class="a" style="left:282px;top:150px;z-index:4" width="9" height="10" viewBox="0 0 9 10" fill="none" stroke="#555" stroke-width="1" stroke-linejoin="round"><path d="M0.8 1 H8.2 L5.3 4.8 V8.8 L3.7 8 V4.8 Z"/></svg>
<div class="a" style="left:396px;top:142px;width:188px;height:26px;border:1px solid #e0e0e4;border-radius:4px;background:#fff;z-index:3"></div>
<svg class="a" style="left:403px;top:150px;z-index:4" width="9" height="10" viewBox="0 0 9 10" fill="none" stroke="#555" stroke-width="1" stroke-linejoin="round"><path d="M0.8 1 H8.2 L5.3 4.8 V8.8 L3.7 8 V4.8 Z"/></svg>
<div class="a" style="left:595px;top:142px;width:139px;height:26px;border:1px solid #e0e0e4;border-radius:4px;background:#fff;z-index:3"></div>
<svg class="a" style="left:602px;top:150px;z-index:4" width="9" height="10" viewBox="0 0 9 10" fill="none" stroke="#555" stroke-width="1" stroke-linejoin="round"><path d="M0.8 1 H8.2 L5.3 4.8 V8.8 L3.7 8 V4.8 Z"/></svg>
<svg class="a" style="left:709px;top:147px;z-index:4" width="16" height="16" viewBox="0 0 16 16" fill="none" stroke="#15b766" stroke-width="1.5"><rect x="1" y="2" width="14" height="13" rx="2.5"/><path d="M1 6 H15 M5 0.8 V3 M11 0.8 V3"/><path d="M3.8 9 H5.2 M7.3 9 H8.7 M10.8 9 H12.2 M3.8 11.6 H5.2 M7.3 11.6 H8.7" stroke-width="1.3"/></svg>
<div class="t" style="left:805px;top:118px;width:62px;text-align:center;font-size:13.4px;font-weight:bold;color:#111;z-index:2">14/4</div>
<div class="t" style="left:805px;top:136px;width:62px;text-align:center;font-size:13.4px;font-weight:bold;color:#111;z-index:2">T3</div>
<svg class="a" style="left:831px;top:157px;z-index:2" width="10" height="7" viewBox="0 0 10 7"><path d="M1 1.2 L5 5.2 L9 1.2" stroke="#666" stroke-width="1.5" fill="none"/></svg>
<div class="t" style="left:867px;top:118px;width:62px;text-align:center;font-size:13.4px;font-weight:bold;color:#111;z-index:2">15/4</div>
<div class="t" style="left:867px;top:136px;width:62px;text-align:center;font-size:13.4px;font-weight:bold;color:#111;z-index:2">T4</div>
<svg class="a" style="left:893px;top:157px;z-index:2" width="10" height="7" viewBox="0 0 10 7"><path d="M1 1.2 L5 5.2 L9 1.2" stroke="#666" stroke-width="1.5" fill="none"/></svg>
<div class="t" style="left:929px;top:118px;width:62px;text-align:center;font-size:13.4px;font-weight:bold;color:#111;z-index:2">16/4</div>
<div class="t" style="left:929px;top:136px;width:62px;text-align:center;font-size:13.4px;font-weight:bold;color:#111;z-index:2">T5</div>
<svg class="a" style="left:955px;top:157px;z-index:2" width="10" height="7" viewBox="0 0 10 7"><path d="M1 1.2 L5 5.2 L9 1.2" stroke="#666" stroke-width="1.5" fill="none"/></svg>
<div class="t" style="left:991px;top:118px;width:62px;text-align:center;font-size:13.4px;font-weight:bold;color:#111;z-index:2">17/4</div>
<div class="t" style="left:991px;top:136px;width:62px;text-align:center;font-size:13.4px;font-weight:bold;color:#111;z-index:2">T6</div>
<svg class="a" style="left:1017px;top:157px;z-index:2" width="10" height="7" viewBox="0 0 10 7"><path d="M1 1.2 L5 5.2 L9 1.2" stroke="#666" stroke-width="1.5" fill="none"/></svg>
<div class="t" style="left:1053px;top:118px;width:62px;text-align:center;font-size:13.4px;font-weight:bold;color:#111;z-index:2">18/4</div>
<div class="t" style="left:1053px;top:136px;width:62px;text-align:center;font-size:13.4px;font-weight:bold;color:#111;z-index:2">T7</div>
<svg class="a" style="left:1079px;top:157px;z-index:2" width="10" height="7" viewBox="0 0 10 7"><path d="M1 1.2 L5 5.2 L9 1.2" stroke="#666" stroke-width="1.5" fill="none"/></svg>
<div class="t" style="left:1115px;top:118px;width:62px;text-align:center;font-size:13.4px;font-weight:bold;color:#111;z-index:2">19/4</div>
<div class="t" style="left:1115px;top:136px;width:62px;text-align:center;font-size:13.4px;font-weight:bold;color:#111;z-index:2">CN</div>
<svg class="a" style="left:1141px;top:157px;z-index:2" width="10" height="7" viewBox="0 0 10 7"><path d="M1 1.2 L5 5.2 L9 1.2" stroke="#666" stroke-width="1.5" fill="none"/></svg>
<div class="t" style="left:1177px;top:118px;width:62px;text-align:center;font-size:13.4px;font-weight:bold;color:#111;z-index:2">20/4</div>
<div class="t" style="left:1177px;top:136px;width:62px;text-align:center;font-size:13.4px;font-weight:bold;color:#111;z-index:2">T2</div>
<svg class="a" style="left:1203px;top:157px;z-index:2" width="10" height="7" viewBox="0 0 10 7"><path d="M1 1.2 L5 5.2 L9 1.2" stroke="#666" stroke-width="1.5" fill="none"/></svg>
<div class="t" style="left:1239px;top:118px;width:62px;text-align:center;font-size:13.4px;font-weight:bold;color:#111;z-index:2">21/4</div>
<div class="t" style="left:1239px;top:136px;width:62px;text-align:center;font-size:13.4px;font-weight:bold;color:#111;z-index:2">T3</div>
<svg class="a" style="left:1265px;top:157px;z-index:2" width="10" height="7" viewBox="0 0 10 7"><path d="M1 1.2 L5 5.2 L9 1.2" stroke="#666" stroke-width="1.5" fill="none"/></svg>
<div class="t" style="left:1301px;top:118px;width:62px;text-align:center;font-size:13.4px;font-weight:bold;color:#111;z-index:2">22/4</div>
<div class="t" style="left:1301px;top:136px;width:62px;text-align:center;font-size:13.4px;font-weight:bold;color:#111;z-index:2">T4</div>
<svg class="a" style="left:1327px;top:157px;z-index:2" width="10" height="7" viewBox="0 0 10 7"><path d="M1 1.2 L5 5.2 L9 1.2" stroke="#666" stroke-width="1.5" fill="none"/></svg>
<div class="t" style="left:1363px;top:118px;width:62px;text-align:center;font-size:13.4px;font-weight:bold;color:#111;z-index:2">23/4</div>
<div class="t" style="left:1363px;top:136px;width:62px;text-align:center;font-size:13.4px;font-weight:bold;color:#111;z-index:2">T5</div>
<svg class="a" style="left:1389px;top:157px;z-index:2" width="10" height="7" viewBox="0 0 10 7"><path d="M1 1.2 L5 5.2 L9 1.2" stroke="#666" stroke-width="1.5" fill="none"/></svg>
<div class="t" style="left:1425px;top:118px;width:62px;text-align:center;font-size:13.4px;font-weight:bold;color:#111;z-index:2">24/4</div>
<div class="t" style="left:1425px;top:136px;width:62px;text-align:center;font-size:13.4px;font-weight:bold;color:#111;z-index:2">T6</div>
<svg class="a" style="left:1451px;top:157px;z-index:2" width="10" height="7" viewBox="0 0 10 7"><path d="M1 1.2 L5 5.2 L9 1.2" stroke="#666" stroke-width="1.5" fill="none"/></svg>
<div class="t" style="left:1487px;top:118px;width:62px;text-align:center;font-size:13.4px;font-weight:bold;color:#111;z-index:2">25/4</div>
<div class="t" style="left:1487px;top:136px;width:62px;text-align:center;font-size:13.4px;font-weight:bold;color:#111;z-index:2">T7</div>
<svg class="a" style="left:1513px;top:157px;z-index:2" width="10" height="7" viewBox="0 0 10 7"><path d="M1 1.2 L5 5.2 L9 1.2" stroke="#666" stroke-width="1.5" fill="none"/></svg>
<div class="t" style="left:1549px;top:118px;width:62px;text-align:center;font-size:13.4px;font-weight:bold;color:#111;z-index:2">26/4</div>
<div class="t" style="left:1549px;top:136px;width:62px;text-align:center;font-size:13.4px;font-weight:bold;color:#111;z-index:2">CN</div>
<svg class="a" style="left:1575px;top:157px;z-index:2" width="10" height="7" viewBox="0 0 10 7"><path d="M1 1.2 L5 5.2 L9 1.2" stroke="#666" stroke-width="1.5" fill="none"/></svg>
<div class="t" style="left:1611px;top:118px;width:62px;text-align:center;font-size:13.4px;font-weight:bold;color:#111;z-index:2">27/4</div>
<div class="t" style="left:1611px;top:136px;width:62px;text-align:center;font-size:13.4px;font-weight:bold;color:#111;z-index:2">T2</div>
<svg class="a" style="left:1637px;top:157px;z-index:2" width="10" height="7" viewBox="0 0 10 7"><path d="M1 1.2 L5 5.2 L9 1.2" stroke="#666" stroke-width="1.5" fill="none"/></svg>
<div class="t" style="left:1673px;top:118px;width:62px;text-align:center;font-size:13.4px;font-weight:bold;color:#111;z-index:2">28/4</div>
<div class="t" style="left:1673px;top:136px;width:62px;text-align:center;font-size:13.4px;font-weight:bold;color:#111;z-index:2">T3</div>
<svg class="a" style="left:1699px;top:157px;z-index:2" width="10" height="7" viewBox="0 0 10 7"><path d="M1 1.2 L5 5.2 L9 1.2" stroke="#666" stroke-width="1.5" fill="none"/></svg>
<div class="t" style="left:1735px;top:118px;width:62px;text-align:center;font-size:13.4px;font-weight:bold;color:#111;z-index:2">29/4</div>
<div class="t" style="left:1735px;top:136px;width:62px;text-align:center;font-size:13.4px;font-weight:bold;color:#111;z-index:2">T4</div>
<svg class="a" style="left:1761px;top:157px;z-index:2" width="10" height="7" viewBox="0 0 10 7"><path d="M1 1.2 L5 5.2 L9 1.2" stroke="#666" stroke-width="1.5" fill="none"/></svg>
<div class="t" style="left:1797px;top:118px;width:62px;text-align:center;font-size:13.4px;font-weight:bold;color:#111;z-index:2">30/4</div>
<div class="t" style="left:1797px;top:136px;width:62px;text-align:center;font-size:13.4px;font-weight:bold;color:#111;z-index:2">T5</div>
<svg class="a" style="left:1823px;top:157px;z-index:2" width="10" height="7" viewBox="0 0 10 7"><path d="M1 1.2 L5 5.2 L9 1.2" stroke="#666" stroke-width="1.5" fill="none"/></svg>
<div class="a" style="left:739px;top:105px;width:80px;height:68px;background:#f3f4f8;z-index:3"></div>
<div class="t" style="left:739px;top:133px;width:80px;text-align:center;font-size:13px;font-weight:bold;color:#111;z-index:4">Tổng số</div>
<div class="a" style="left:739px;top:105px;width:1px;height:68px;background:#d8dbe9;z-index:4"></div>
<svg class="a" style="left:1873px;top:130px;z-index:3" width="16" height="17" viewBox="0 0 16 17" fill="none" stroke="#707070" stroke-width="1.5"><path d="M0.3 3.8 H15.7" stroke-width="1.6"/><path d="M3.9 3.2 L4.9 1.2 H11.1 L12.1 3.2 Z" fill="#707070" stroke-width="0.8"/><path d="M2.9 4.4 V13.6 Q2.9 15.6 4.9 15.6 H11.1 Q13.1 15.6 13.1 13.6 V4.4"/><path d="M5.4 7 V13 M8 7 V13 M10.5 7 V13" stroke-width="1.3" stroke-linecap="round"/></svg>
<div class="a" style="left:1900px;top:175px;width:9px;height:683px;background:#efefef;z-index:3"></div>
<div class="a" style="left:1900px;top:174px;width:8px;height:624px;background:#a9a9a9;border-radius:4px;z-index:4"></div>
<div class="a" style="left:219px;top:858px;width:1690px;height:8px;background:#ececec;z-index:3"></div>
<div class="a" style="left:1287px;top:858px;width:613px;height:8px;background:#a9a9a9;border-radius:4px;z-index:4"></div>
<div class="a" style="left:218px;top:866px;width:1691px;height:32px;background:#dbe1ec;z-index:3"></div>
<div class="a" style="left:389px;top:866px;width:1px;height:32px;background:#d2d6e6;z-index:4"></div>
<div class="a" style="left:739px;top:866px;width:1px;height:32px;background:#d2d6e6;z-index:4"></div>
<div class="a" style="left:819px;top:866px;width:1px;height:32px;background:#d2d6e6;z-index:4"></div>
<div class="a" style="left:868px;top:866px;width:1px;height:32px;background:#d2d6e6;z-index:4"></div>
<div class="a" style="left:930px;top:866px;width:1px;height:32px;background:#d2d6e6;z-index:4"></div>
<div class="a" style="left:992px;top:866px;width:1px;height:32px;background:#d2d6e6;z-index:4"></div>
<div class="a" style="left:1054px;top:866px;width:1px;height:32px;background:#d2d6e6;z-index:4"></div>
<div class="a" style="left:1116px;top:866px;width:1px;height:32px;background:#d2d6e6;z-index:4"></div>
<div class="a" style="left:1178px;top:866px;width:1px;height:32px;background:#d2d6e6;z-index:4"></div>
<div class="a" style="left:1240px;top:866px;width:1px;height:32px;background:#d2d6e6;z-index:4"></div>
<div class="a" style="left:1302px;top:866px;width:1px;height:32px;background:#d2d6e6;z-index:4"></div>
<div class="a" style="left:1364px;top:866px;width:1px;height:32px;background:#d2d6e6;z-index:4"></div>
<div class="a" style="left:1426px;top:866px;width:1px;height:32px;background:#d2d6e6;z-index:4"></div>
<div class="a" style="left:1488px;top:866px;width:1px;height:32px;background:#d2d6e6;z-index:4"></div>
<div class="a" style="left:1550px;top:866px;width:1px;height:32px;background:#d2d6e6;z-index:4"></div>
<div class="a" style="left:1612px;top:866px;width:1px;height:32px;background:#d2d6e6;z-index:4"></div>
<div class="a" style="left:1674px;top:866px;width:1px;height:32px;background:#d2d6e6;z-index:4"></div>
<div class="a" style="left:1736px;top:866px;width:1px;height:32px;background:#d2d6e6;z-index:4"></div>
<div class="a" style="left:1798px;top:866px;width:1px;height:32px;background:#d2d6e6;z-index:4"></div>
<div class="a" style="left:1860px;top:866px;width:1px;height:32px;background:#d2d6e6;z-index:4"></div>
<div class="a" style="left:1900px;top:866px;width:1px;height:32px;background:#d2d6e6;z-index:4"></div>
<div class="t" style="left:400px;top:876px;font-size:13px;color:#333;z-index:5">Tổng: <b style="color:#222">22</b> kết quả</div>
<div class="t" style="left:740px;top:876px;width:68px;text-align:right;font-size:13.6px;color:#2a2a2a;-webkit-text-stroke:0.45px #2a2a2a;z-index:5">0,00</div>
<div class="t" style="left:807px;top:876px;width:50px;text-align:right;font-size:13.6px;color:#2a2a2a;-webkit-text-stroke:0.45px #2a2a2a;z-index:5">0,00</div>
<div class="t" style="left:869px;top:876px;width:50px;text-align:right;font-size:13.6px;color:#2a2a2a;-webkit-text-stroke:0.45px #2a2a2a;z-index:5">0,00</div>
<div class="t" style="left:931px;top:876px;width:50px;text-align:right;font-size:13.6px;color:#2a2a2a;-webkit-text-stroke:0.45px #2a2a2a;z-index:5">0,00</div>
<div class="t" style="left:993px;top:876px;width:50px;text-align:right;font-size:13.6px;color:#2a2a2a;-webkit-text-stroke:0.45px #2a2a2a;z-index:5">0,00</div>
<div class="t" style="left:1055px;top:876px;width:50px;text-align:right;font-size:13.6px;color:#2a2a2a;-webkit-text-stroke:0.45px #2a2a2a;z-index:5">0,00</div>
<div class="t" style="left:1117px;top:876px;width:50px;text-align:right;font-size:13.6px;color:#2a2a2a;-webkit-text-stroke:0.45px #2a2a2a;z-index:5">0,00</div>
<div class="t" style="left:1179px;top:876px;width:50px;text-align:right;font-size:13.6px;color:#2a2a2a;-webkit-text-stroke:0.45px #2a2a2a;z-index:5">0,00</div>
<div class="t" style="left:1241px;top:876px;width:50px;text-align:right;font-size:13.6px;color:#2a2a2a;-webkit-text-stroke:0.45px #2a2a2a;z-index:5">0,00</div>
<div class="t" style="left:1303px;top:876px;width:50px;text-align:right;font-size:13.6px;color:#2a2a2a;-webkit-text-stroke:0.45px #2a2a2a;z-index:5">0,00</div>
<div class="t" style="left:1365px;top:876px;width:50px;text-align:right;font-size:13.6px;color:#2a2a2a;-webkit-text-stroke:0.45px #2a2a2a;z-index:5">0,00</div>
<div class="t" style="left:1427px;top:876px;width:50px;text-align:right;font-size:13.6px;color:#2a2a2a;-webkit-text-stroke:0.45px #2a2a2a;z-index:5">0,00</div>
<div class="t" style="left:1489px;top:876px;width:50px;text-align:right;font-size:13.6px;color:#2a2a2a;-webkit-text-stroke:0.45px #2a2a2a;z-index:5">0,00</div>
<div class="t" style="left:1551px;top:876px;width:50px;text-align:right;font-size:13.6px;color:#2a2a2a;-webkit-text-stroke:0.45px #2a2a2a;z-index:5">0,00</div>
<div class="t" style="left:1613px;top:876px;width:50px;text-align:right;font-size:13.6px;color:#2a2a2a;-webkit-text-stroke:0.45px #2a2a2a;z-index:5">0,00</div>
<div class="t" style="left:1675px;top:876px;width:50px;text-align:right;font-size:13.6px;color:#2a2a2a;-webkit-text-stroke:0.45px #2a2a2a;z-index:5">0,00</div>
<div class="t" style="left:1737px;top:876px;width:50px;text-align:right;font-size:13.6px;color:#2a2a2a;-webkit-text-stroke:0.45px #2a2a2a;z-index:5">0,00</div>
<div class="t" style="left:1799px;top:876px;width:50px;text-align:right;font-size:13.6px;color:#2a2a2a;-webkit-text-stroke:0.45px #2a2a2a;z-index:5">0,00</div>
<div class="a" style="left:1905px;top:461px;width:16px;height:31px;background:#1a73e8;border-radius:5px 0 0 5px;z-index:12"></div>
<svg class="a" style="left:1909px;top:471px;z-index:13" width="8" height="11" viewBox="0 0 8 11"><path d="M2 1.5 L6 5.5 L2 9.5" stroke="#fff" stroke-width="1.8" fill="none"/></svg>
<div class="a" style="left:1865px;top:497px;width:56px;height:151px;background:#fff;border-radius:12px 0 0 12px;box-shadow:0 0 4px rgba(0,0,0,0.08);z-index:12"></div>
<div class="a" style="left:1873px;top:505px;width:40px;height:40px;border-radius:50%;background:#12a816;z-index:13"></div>
<div class="a" style="left:1873px;top:553px;width:40px;height:40px;border-radius:50%;background:#1a73e8;z-index:13"></div>
<div class="a" style="left:1873px;top:601px;width:40px;height:40px;border-radius:50%;background:linear-gradient(#25c48a,#149c5e);z-index:13"></div>
<svg class="a" style="left:1881px;top:513px;z-index:14" width="24" height="24" viewBox="0 0 24 24">
<circle cx="12" cy="8.6" r="5.4" fill="#fff"/><path d="M8.9 11.2 L9.9 15.2 H14.1 L15.1 11.2 Z" fill="#fff"/>
<circle cx="12" cy="9.2" r="1.3" fill="none" stroke="#12a816" stroke-width="0.9"/><path d="M12 10.5 V15" stroke="#12a816" stroke-width="0.9"/>
<path d="M9.6 16.5 H14.4 M10 18.1 H14 M10.9 19.7 H13.1" stroke="#fff" stroke-width="1.1"/>
<path d="M4.2 4.2 L5.3 5 M3.4 8.6 H4.8 M4.2 13 L5.3 12.2 M19.8 4.2 L18.7 5 M20.6 8.6 H19.2 M19.8 13 L18.7 12.2" stroke="#fff" stroke-width="1.1"/></svg>
<svg class="a" style="left:1881px;top:561px;z-index:14" width="24" height="24" viewBox="0 0 24 24">
<path d="M11 4.6 L19 12.6 L17.6 14 L9.6 6 Z" fill="#fff"/>
<path d="M10.1 7.1 L16.5 13.5 L10.6 16.6 L7 13 Z" fill="#fff"/>
<path d="M6.6 13.4 L10.2 17 L8.5 18.5 Q7.2 19.5 6 18.3 L5.3 17.6 Q4.1 16.2 5.1 15 Z" fill="#fff"/>
<path d="M10.8 17.2 L13.6 18.6 Q14.7 19.6 13.8 20.6 Q12.8 21.5 11.8 20.6 L9.6 18.3 Z" fill="#fff"/>
<path d="M15.6 4.6 L16.3 2.5 M17.6 6.4 L19.8 5.7 M16.8 5.3 L18.7 3.4" stroke="#fff" stroke-width="1"/></svg>
<svg class="a" style="left:1879px;top:607px;z-index:14" width="28" height="28" viewBox="0 0 28 28">
<path d="M13.5 2.8 C5 2.8 1 10 1 14.8 C1 19.6 5 26.9 13.5 26.9 C22 26.9 26 19.6 26 14.8 C26 10 22 2.8 13.5 2.8 Z" fill="#fff"/><circle cx="13.6" cy="14.6" r="8.2" fill="#1fb57a"/><path d="M18.5 20.5 L22.8 23.6 L21.2 18.5 Z" fill="#1fb57a"/><circle cx="11.1" cy="14.6" r="1.4" fill="#fff"/><circle cx="16.1" cy="14.6" r="1.4" fill="#fff"/></svg>
<div class="a" style="left:202px;top:216px;width:275px;height:420px;background:#4a4a4a;z-index:40"></div>
<div class="t" style="left:226px;top:241px;font-size:17.4px;font-weight:bold;color:#fff;z-index:41">Quản lý thu</div>
<div class="t" style="left:226px;top:285px;font-size:13.1px;color:#f4f4f4;-webkit-text-stroke:0.3px #f4f4f4;z-index:41">Quy trình</div>
<div class="t" style="left:226px;top:327px;font-size:13.1px;color:#f4f4f4;-webkit-text-stroke:0.3px #f4f4f4;z-index:41">Đợt thu</div>
<div class="t" style="left:226px;top:369px;font-size:13.1px;color:#f4f4f4;-webkit-text-stroke:0.3px #f4f4f4;z-index:41">Thu tiền</div>
<div class="t" style="left:226px;top:411px;font-size:13.1px;color:#f4f4f4;-webkit-text-stroke:0.3px #f4f4f4;z-index:41">Chốt đợt thu</div>
<div class="t" style="left:226px;top:453px;font-size:13.1px;color:#f4f4f4;-webkit-text-stroke:0.3px #f4f4f4;z-index:41">Hóa đơn</div>
<div class="t" style="left:226px;top:495px;font-size:13.1px;color:#1fc46e;-webkit-text-stroke:0.3px #1fc46e;z-index:41">Ghi nhận số lượng thực tế</div>
<div class="t" style="left:226px;top:537px;font-size:13.1px;color:#f4f4f4;-webkit-text-stroke:0.3px #f4f4f4;z-index:41">Đối soát sổ phụ ngân hàng</div>
<div class="t" style="left:226px;top:579px;font-size:13.1px;color:#f4f4f4;-webkit-text-stroke:0.3px #f4f4f4;z-index:41">Đối soát giao dịch thanh toán trực</div>
<div class="t" style="left:226px;top:597px;font-size:13.1px;color:#f4f4f4;-webkit-text-stroke:0.3px #f4f4f4;z-index:41">tuyến</div>
<div class="a" style="left:210px;top:481px;width:200px;height:48px;border:4px solid #fd4444;z-index:42"></div>
</body></html>
